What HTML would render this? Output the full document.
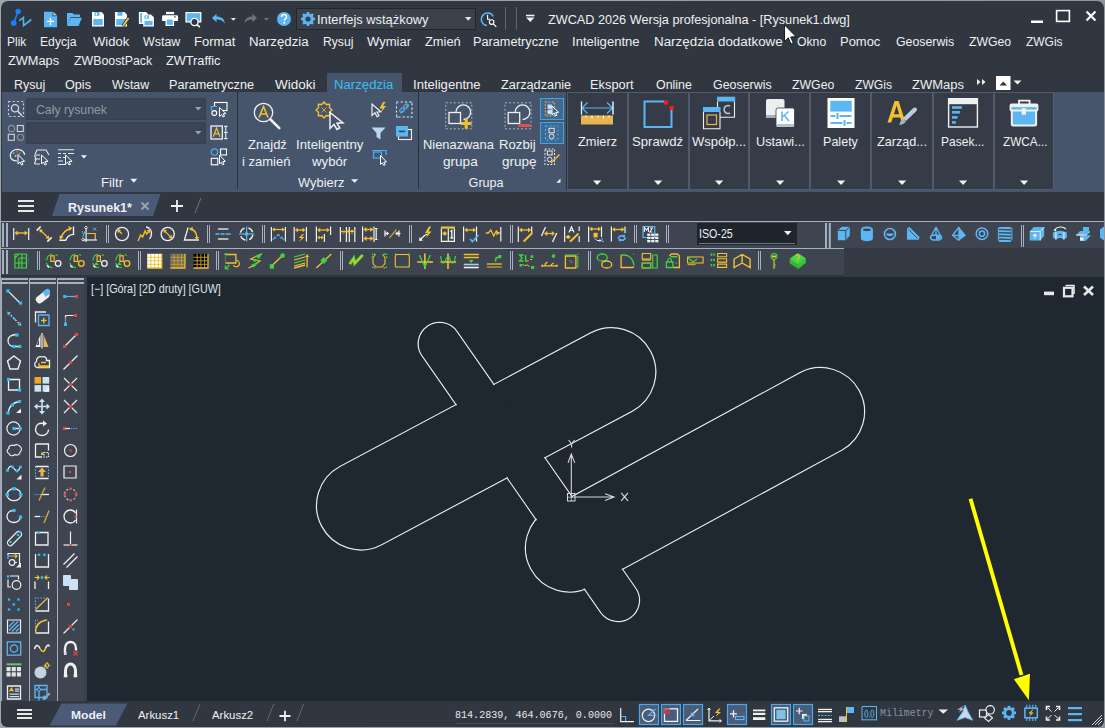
<!DOCTYPE html>
<html><head><meta charset="utf-8">
<style>
*{margin:0;padding:0;box-sizing:border-box}
html,body{width:1105px;height:728px;overflow:hidden;background:linear-gradient(to right,#9fa7ac,#9aa1a6 60%,#8f969b)}
body{position:relative;font-family:"Liberation Sans",sans-serif;color:#f0f0f0}
.a{position:absolute}
.t{position:absolute;white-space:pre;line-height:1;font-size:12.5px;color:#eef0f2}
svg{position:absolute;overflow:visible}
#win{position:absolute;left:1px;top:1px;width:1103px;height:726px;background:#313740;border-radius:7px 7px 6px 6px;overflow:hidden}
</style></head><body>
<div id="win"></div>
<!-- ribbon panel -->
<div class="a" style="left:2px;top:92px;width:1102px;height:100px;background:#47556c"></div>
<!-- toolbars -->
<div class="a" style="left:1px;top:221px;width:1103px;height:1px;background:#a3b1c2"></div>
<div class="a" style="left:1px;top:222px;width:1103px;height:26px;background:#3e4550"></div>
<div class="a" style="left:1px;top:248px;width:843px;height:1px;background:#a3b1c2"></div>
<div class="a" style="left:1px;top:249px;width:843px;height:26px;background:#3e4550"></div>
<div class="a" style="left:844px;top:248px;width:260px;height:29px;background:#343a44"></div>
<div class="a" style="left:1px;top:275px;width:843px;height:2px;background:#2e343c"></div>
<!-- left toolbar -->
<div class="a" style="left:1px;top:277px;width:86px;height:424px;background:#3e4550"></div>
<!-- drawing -->
<div class="a" style="left:87px;top:277px;width:1017px;height:424px;background:#1f2730"></div>
<!-- ===== TITLE BAR ===== -->
<svg style="left:0;top:0" width="1105" height="40">
 <!-- logo -->
 <line x1="18.1" y1="11.5" x2="13.7" y2="23.1" stroke="#1f7ff2" stroke-width="1.6"/>
 <circle cx="18.1" cy="11.5" r="2.7" fill="#1f7ff2"/>
 <circle cx="13.7" cy="23.1" r="2.9" fill="#1f7ff2"/>
 <polyline points="19.3,20.6 23.4,17.6 23.6,25.6 31.3,19.5" fill="none" stroke="#4bb6ee" stroke-width="1.6"/>
 <!-- new -->
 <path d="M44,11.8 H52.6 L57.1,16.2 V27.2 H44 Z" fill="#5cb6f2"/>
 <path d="M52.6,11.8 L57.1,16.2 H52.6 Z" fill="#313740"/>
 <path d="M53.3,11.8 L57.1,15.6 H53.3Z" fill="#8fd0f8"/>
 <path d="M47,21.4 H54 M50.5,18 V25" stroke="#fff" stroke-width="1.4"/>
 <!-- open -->
 <path d="M67,13 H72.5 L74,14.5 H80 V17 H70.5 L67,26 Z" fill="#5cb6f2"/>
 <path d="M70.5,17.8 H82 L78.5,26 H67 Z" fill="#5cb6f2"/>
 <!-- save -->
 <path d="M92,12 H101.5 L104,14.5 V26.4 H92 Z" fill="#fff"/>
 <rect x="93.2" y="19" width="9.6" height="6.2" fill="#5cb6f2"/>
 <rect x="94.5" y="12" width="5" height="3.8" fill="#5cb6f2"/>
 <rect x="95.8" y="12.6" width="1.2" height="2.6" fill="#fff"/>
 <!-- save as -->
 <path d="M115,12 H124.5 L127,14.5 V26.4 H115 Z" fill="#fff"/>
 <rect x="116.2" y="19" width="9.6" height="6.2" fill="#5cb6f2"/>
 <rect x="117.5" y="12" width="5" height="3.8" fill="#5cb6f2"/>
 <line x1="123" y1="26" x2="129" y2="17.5" stroke="#313740" stroke-width="3.4"/>
 <line x1="123.2" y1="25.8" x2="128.6" y2="18" stroke="#f2c232" stroke-width="2"/>
 <!-- save all -->
 <path d="M138.9,11.9 H146 L148,13.9 V23.9 H138.9 Z" fill="#fff"/>
 <rect x="140.2" y="13" width="1.8" height="9.8" fill="#5cb6f2"/>
 <path d="M143.2,14.4 H151 L153.9,17.3 V26.5 H143.2 Z" fill="#fff"/>
 <rect x="144.5" y="15.3" width="4.3" height="3.4" fill="#5cb6f2"/>
 <rect x="145.9" y="15.8" width="1.2" height="2.2" fill="#fff"/>
 <rect x="144.5" y="20.9" width="8.1" height="4.3" fill="#5cb6f2"/>
 <!-- print -->
 <rect x="166" y="11.9" width="8.1" height="2.3" fill="#fff"/>
 <path d="M163.3,15.3 H176.8 Q178,15.3 178,16.5 V20.9 H162.1 V16.5 Q162.1,15.3 163.3,15.3Z" fill="#fff"/>
 <rect x="174" y="16.4" width="1.8" height="1" fill="#313740"/>
 <rect x="165.5" y="18.7" width="8.6" height="7.3" fill="#fff"/>
 <rect x="166.8" y="19.6" width="6" height="5.2" fill="#5cb6f2"/>
 <!-- preview -->
 <rect x="185.4" y="12" width="16" height="10.5" fill="#fff"/>
 <rect x="186.6" y="13.2" width="13.6" height="8.1" fill="#5cb6f2"/>
 <circle cx="194.5" cy="22" r="3.6" fill="#313740" stroke="#fff" stroke-width="1.3"/>
 <line x1="197" y1="24.5" x2="199.8" y2="27.2" stroke="#fff" stroke-width="1.6"/>
 <!-- undo -->
 <path d="M212,18 L216.5,13.8 V16.6 C221,16.6 224.6,18.5 224.6,23.8 C223,20.5 220.5,19.6 216.5,19.6 V22.3 Z" fill="#5cb6f2"/>
 <path d="M230.8,18 H236 L233.4,20.8Z" fill="#e8e8e8"/>
 <!-- redo -->
 <path d="M257,18 L252.5,13.8 V16.6 C248,16.6 244.6,18.5 244.6,23.8 C246,20.5 248.5,19.6 252.5,19.6 V22.3 Z" fill="#6d737b"/>
 <path d="M263.8,18 H269 L266.4,20.8Z" fill="#6d737b"/>
 <!-- help -->
 <circle cx="284" cy="19" r="7" fill="#5cb6f2"/>
 <path d="M281.6,17 C281.6,15.2 282.8,14.6 284.1,14.6 C285.6,14.6 286.6,15.5 286.6,16.8 C286.6,18.6 284.3,18.7 284.3,20.8" fill="none" stroke="#fff" stroke-width="1.5"/>
 <rect x="283.4" y="22" width="1.7" height="1.7" fill="#fff"/>
 <!-- combo -->
 <rect x="296.5" y="8.5" width="179" height="21" fill="#3a414b" stroke="#22272e" stroke-width="1"/>
 <g transform="translate(308,19)">
  <circle r="4.6" fill="none" stroke="#5cb6f2" stroke-width="2.4"/>
  <g stroke="#5cb6f2" stroke-width="2.4">
   <line x1="0" y1="-7" x2="0" y2="7"/><line x1="-7" y1="0" x2="7" y2="0"/>
   <line x1="-5" y1="-5" x2="5" y2="5"/><line x1="-5" y1="5" x2="5" y2="-5"/>
  </g>
  <circle r="2.6" fill="#3a414b"/>
 </g>
 <path d="M465,17 H471.5 L468.25,20.8Z" fill="#e8e8e8"/>
 <!-- clock search -->
 <path d="M493.3,16.5 A6.3,6.3 0 1 0 487,25.6" fill="none" stroke="#5cb6f2" stroke-width="1.5"/>
 <path d="M487.6,14.8 V19.3 H490" fill="none" stroke="#fff" stroke-width="1.1"/>
 <circle cx="491.6" cy="22.1" r="2.3" fill="#313740" stroke="#fff" stroke-width="1.1"/>
 <line x1="493.3" y1="23.8" x2="496.3" y2="26.8" stroke="#fff" stroke-width="1.2"/>
 <!-- separators -->
 <rect x="505" y="7" width="1" height="23" fill="#62676e"/>
 <rect x="516" y="7" width="1" height="23" fill="#62676e"/>
 <rect x="526" y="14.7" width="8.5" height="1.6" fill="#f0f0f0"/>
 <path d="M526,17.6 H534.5 L530.25,22Z" fill="#f0f0f0"/>
 <!-- window controls -->
 <rect x="1031" y="20.5" width="12" height="2.5" fill="#fff"/>
 <rect x="1056.6" y="10.6" width="12.8" height="10.8" fill="none" stroke="#fff" stroke-width="1.6"/>
 <path d="M1086.5,11.5 L1095.5,20.5 M1095.5,11.5 L1086.5,20.5" stroke="#fff" stroke-width="2.2"/>
</svg>
<div class="t" style="left:317.39px;top:14.4px;font-size:12.7px;transform:scaleX(1.0138);transform-origin:0 0">Interfejs wstążkowy</div>
<div class="t" style="left:548.40px;top:14px;font-size:12.7px;transform:scaleX(0.9987);transform-origin:0 0">ZWCAD 2026 Wersja profesjonalna - [Rysunek1.dwg]</div>
<!-- ===== MENU BAR ===== -->
<div class="a" style="left:327px;top:73px;width:75px;height:19px;background:#47556c"></div>
<div class="t" style="left:7.44px;top:36px;transform:scaleX(0.9579);transform-origin:0 0">Plik</div>
<div class="t" style="left:40.33px;top:36px;transform:scaleX(0.9730);transform-origin:0 0">Edycja</div>
<div class="t" style="left:92.50px;top:36px;transform:scaleX(1.0429);transform-origin:0 0">Widok</div>
<div class="t" style="left:143.20px;top:36px;transform:scaleX(0.9947);transform-origin:0 0">Wstaw</div>
<div class="t" style="left:193.96px;top:36px;transform:scaleX(1.0436);transform-origin:0 0">Format</div>
<div class="t" style="left:249.04px;top:36px;transform:scaleX(1.0600);transform-origin:0 0">Narzędzia</div>
<div class="t" style="left:322.63px;top:36px;transform:scaleX(0.9733);transform-origin:0 0">Rysuj</div>
<div class="t" style="left:367.20px;top:36px;transform:scaleX(1.0429);transform-origin:0 0">Wymiar</div>
<div class="t" style="left:425.00px;top:36px;transform:scaleX(1.0294);transform-origin:0 0">Zmień</div>
<div class="t" style="left:473.38px;top:36px;transform:scaleX(1.0169);transform-origin:0 0">Parametryczne</div>
<div class="t" style="left:572.45px;top:36px;transform:scaleX(1.0460);transform-origin:0 0">Inteligentne</div>
<div class="t" style="left:653.53px;top:36px;transform:scaleX(1.0706);transform-origin:0 0">Narzędzia dodatkowe</div>
<div class="t" style="left:796.70px;top:36px;transform:scaleX(0.9767);transform-origin:0 0">Okno</div>
<div class="t" style="left:840.16px;top:36px;transform:scaleX(1.0368);transform-origin:0 0">Pomoc</div>
<div class="t" style="left:895.80px;top:36px;transform:scaleX(0.9864);transform-origin:0 0">Geoserwis</div>
<div class="t" style="left:969.40px;top:36px;transform:scaleX(0.9791);transform-origin:0 0">ZWGeo</div>
<div class="t" style="left:1026.00px;top:36px;transform:scaleX(0.9579);transform-origin:0 0">ZWGis</div>
<div class="t" style="left:8.40px;top:54.5px;transform:scaleX(1.0220);transform-origin:0 0">ZWMaps</div>
<div class="t" style="left:74.00px;top:54.5px;transform:scaleX(0.9873);transform-origin:0 0">ZWBoostPack</div>
<div class="t" style="left:166.00px;top:54.5px;transform:scaleX(1.0189);transform-origin:0 0">ZWTraffic</div>
<div class="t" style="left:14.20px;top:79px;transform:scaleX(0.9967);transform-origin:0 0">Rysuj</div>
<div class="t" style="left:65.40px;top:79px;transform:scaleX(1.0115);transform-origin:0 0">Opis</div>
<div class="t" style="left:112.30px;top:79px;transform:scaleX(0.9921);transform-origin:0 0">Wstaw</div>
<div class="t" style="left:169.29px;top:79px;transform:scaleX(1.0108);transform-origin:0 0">Parametryczne</div>
<div class="t" style="left:275.00px;top:79px;transform:scaleX(1.0811);transform-origin:0 0">Widoki</div>
<div class="t" style="left:334.35px;top:79px;transform:scaleX(1.0545);transform-origin:0 0;color:#38bdf5">Narzędzia</div>
<div class="t" style="left:413.35px;top:79px;transform:scaleX(1.0460);transform-origin:0 0">Inteligentne</div>
<div class="t" style="left:501.00px;top:79px;transform:scaleX(1.0206);transform-origin:0 0">Zarządzanie</div>
<div class="t" style="left:590.37px;top:79px;transform:scaleX(1.0262);transform-origin:0 0">Eksport</div>
<div class="t" style="left:655.80px;top:79px;transform:scaleX(0.9917);transform-origin:0 0">Online</div>
<div class="t" style="left:712.80px;top:79px;transform:scaleX(0.9932);transform-origin:0 0">Geoserwis</div>
<div class="t" style="left:792.20px;top:79px;transform:scaleX(0.9837);transform-origin:0 0">ZWGeo</div>
<div class="t" style="left:855.20px;top:79px;transform:scaleX(0.9684);transform-origin:0 0">ZWGis</div>
<div class="t" style="left:911.90px;top:79px;transform:scaleX(1.0380);transform-origin:0 0">ZWMaps</div>
<svg style="left:0;top:0" width="1105" height="95">
 <path d="M977,79 L980.5,82 L977,85Z M982,79 L985.5,82 L982,85Z" fill="#f0f0f0"/>
 <rect x="996" y="76" width="14.5" height="14" fill="#fff"/>
 <path d="M999.5,85.5 H1007 L1003.25,81.5Z" fill="#313740"/>
 <path d="M1013.5,80.5 H1021.5 L1017.5,84.6Z" fill="#f0f0f0"/>
 <!-- mouse cursor -->
 <path d="M784.5,25 V41.5 L788.3,37.8 L791,44 L793.3,43 L790.7,37 L796,36.6 Z" fill="#fff" stroke="#111" stroke-width="0.9"/>
</svg>
<!-- ===== RIBBON PANEL ===== -->
<div class="a" style="left:26px;top:98px;width:180px;height:21.5px;background:#3b4556;border:1px solid #344051"></div>
<div class="a" style="left:26px;top:122px;width:180px;height:21.5px;background:#3b4556;border:1px solid #344051"></div>
<div class="a" style="left:237px;top:92px;width:1px;height:97px;background:#29303a"></div>
<div class="a" style="left:418px;top:92px;width:1px;height:97px;background:#29303a"></div>
<div class="a" style="left:566px;top:92px;width:1px;height:98px;background:#29303a"></div>
<!-- big buttons -->
<div class="a" style="left:567px;top:92px;width:61px;height:98px;background:#353c48;border:1px solid #515b69"></div>
<div class="a" style="left:628px;top:92px;width:61px;height:98px;background:#353c48;border:1px solid #515b69"></div>
<div class="a" style="left:689px;top:92px;width:60px;height:98px;background:#353c48;border:1px solid #515b69"></div>
<div class="a" style="left:749px;top:92px;width:61px;height:98px;background:#353c48;border:1px solid #515b69"></div>
<div class="a" style="left:810px;top:92px;width:61px;height:98px;background:#353c48;border:1px solid #515b69"></div>
<div class="a" style="left:871px;top:92px;width:62px;height:98px;background:#353c48;border:1px solid #515b69"></div>
<div class="a" style="left:933px;top:92px;width:61px;height:98px;background:#353c48;border:1px solid #515b69"></div>
<div class="a" style="left:994px;top:92px;width:60px;height:98px;background:#353c48;border:1px solid #515b69"></div>
<!-- blue toggle buttons -->
<div class="a" style="left:540px;top:98px;width:24px;height:22px;background:#41688e;border:1px solid #3ea6e8"></div>
<div class="a" style="left:540px;top:122px;width:24px;height:22px;background:#41688e;border:1px solid #3ea6e8"></div>
<!-- labels -->
<div class="t" style="left:35.80px;top:104.3px;font-size:12.6px;transform:scaleX(0.9753);transform-origin:0 0;color:#8e9aa8">Cały rysunek</div>
<div class="t" style="left:100.95px;top:177px;font-size:12.6px;transform:scaleX(1.0500);transform-origin:0 0">Filtr</div>
<div class="t" style="left:248.00px;top:139px;font-size:12.6px;transform:scaleX(1.0270);transform-origin:0 0">Znajdź</div>
<div class="t" style="left:242.47px;top:156px;font-size:12.6px;transform:scaleX(1.0326);transform-origin:0 0">i zamień</div>
<div class="t" style="left:295.85px;top:139px;font-size:12.6px;transform:scaleX(1.0460);transform-origin:0 0">Inteligentny</div>
<div class="t" style="left:312.00px;top:156px;font-size:12.6px;transform:scaleX(1.0500);transform-origin:0 0">wybór</div>
<div class="t" style="left:297.50px;top:177px;font-size:12.6px;transform:scaleX(1.0244);transform-origin:0 0">Wybierz</div>
<div class="t" style="left:423.38px;top:139px;font-size:12.6px;transform:scaleX(1.0221);transform-origin:0 0">Nienazwana</div>
<div class="t" style="left:442.50px;top:156px;font-size:12.6px;transform:scaleX(1.0781);transform-origin:0 0">grupa</div>
<div class="t" style="left:499.35px;top:139px;font-size:12.6px;transform:scaleX(1.0471);transform-origin:0 0">Rozbij</div>
<div class="t" style="left:501.60px;top:156px;font-size:12.6px;transform:scaleX(1.0750);transform-origin:0 0">grupę</div>
<div class="t" style="left:468.60px;top:177px;font-size:12.6px;transform:scaleX(1.0000);transform-origin:0 0">Grupa</div>
<div class="t" style="left:578.40px;top:136px;font-size:12.6px;transform:scaleX(1.0158);transform-origin:0 0">Zmierz</div>
<div class="t" style="left:631.96px;top:136px;font-size:12.6px;transform:scaleX(1.0417);transform-origin:0 0">Sprawdź</div>
<div class="t" style="left:692.30px;top:136px;font-size:12.6px;transform:scaleX(1.0327);transform-origin:0 0">Współp...</div>
<div class="t" style="left:756.49px;top:136px;font-size:12.6px;transform:scaleX(1.0109);transform-origin:0 0">Ustawi...</div>
<div class="t" style="left:823.40px;top:136px;font-size:12.6px;transform:scaleX(0.9971);transform-origin:0 0">Palety</div>
<div class="t" style="left:877.00px;top:136px;font-size:12.6px;transform:scaleX(1.0041);transform-origin:0 0">Zarząd...</div>
<div class="t" style="left:941.05px;top:136px;font-size:12.6px;transform:scaleX(0.9545);transform-origin:0 0">Pasek...</div>
<div class="t" style="left:1003.00px;top:136px;font-size:12.6px;transform:scaleX(0.9362);transform-origin:0 0">ZWCA...</div>
<svg style="left:0;top:0" width="1105" height="200">
 <!-- dropdown arrows -->
 <g fill="#9aa3ad">
  <path d="M195,107 H201.5 L198.25,110.6Z"/><path d="M195,131 H201.5 L198.25,134.6Z"/>
 </g>
 <g fill="#f2f2f2">
  <path d="M80.9,155.2 H86.9 L83.9,158.4Z"/>
  <path d="M130.4,178.8 H137.2 L133.8,182.8Z"/>
  <path d="M351,179.2 H358.2 L354.6,182.8Z"/>
  <path d="M560.5,178.6 V182.8 H556.3Z"/>
  <path d="M593,180.5 H601.2 L597.1,185Z"/>
  <path d="M654,180.5 H662.2 L658.1,185Z"/>
  <path d="M715,180.5 H723.2 L719.1,185Z"/>
  <path d="M776,180.5 H784.2 L780.1,185Z"/>
  <path d="M837,180.5 H845.2 L841.1,185Z"/>
  <path d="M898,180.5 H906.2 L902.1,185Z"/>
  <path d="M959,180.5 H967.2 L963.1,185Z"/>
  <path d="M1020,180.5 H1028.2 L1024.1,185Z"/>
 </g>
 <!-- filtr icons -->
 <rect x="8.5" y="101.5" width="15" height="15" fill="none" stroke="#c5cad0" stroke-width="1.1" stroke-dasharray="2.2,2"/>
 <circle cx="15" cy="108.3" r="3.6" fill="#47556c" stroke="#d2d6da" stroke-width="1.3"/>
 <line x1="17.6" y1="111" x2="22" y2="115.6" stroke="#d2d6da" stroke-width="1.6"/>
 <circle cx="11.5" cy="128.5" r="3.1" fill="none" stroke="#8c939b" stroke-width="1.1"/>
 <rect x="17.3" y="125.5" width="6" height="6" fill="none" stroke="#d0d4d8" stroke-width="1.1"/>
 <rect x="8.3" y="134.3" width="6" height="6" fill="none" stroke="#d0d4d8" stroke-width="1.1"/>
 <circle cx="20.5" cy="137.3" r="3.1" fill="none" stroke="#8c939b" stroke-width="1.1"/>
 <!-- right col -->
 <rect x="214.5" y="102.5" width="12.5" height="8" fill="none" stroke="#fff" stroke-width="1.1"/>
 <rect x="211" y="106" width="8" height="5" fill="#47556c"/>
 <path d="M211.3,110.5 V106.5 H217" fill="none" stroke="#4fb0f0" stroke-width="1.2"/>
 <circle cx="214.3" cy="113" r="2.4" fill="none" stroke="#fff" stroke-width="1.1"/>
 <path d="M219.5,107.5 V116.5 L221.5,114.5 L223,117 L224.5,116.3 L223.2,113.8 L226,113.6Z" fill="#47556c" stroke="#fff" stroke-width="1"/>
 <rect x="211" y="126" width="11.3" height="13" fill="none" stroke="#fff" stroke-width="1.2"/>
 <path d="M213.3,136.8 L216.6,128 L220,136.8 M214.5,133.8 H218.8" fill="none" stroke="#f2c232" stroke-width="1.2"/>
 <path d="M225.8,126 V139 M224,126.3 H227.6 M224,138.7 H227.6 M224,132.5 H227.6" fill="none" stroke="#fff" stroke-width="1"/>
 <circle cx="214.5" cy="152" r="3.2" fill="none" stroke="#4fb0f0" stroke-width="1.2"/>
 <rect x="220.5" y="149" width="6" height="6" fill="none" stroke="#fff" stroke-width="1.1"/>
 <rect x="211.3" y="158.3" width="6.5" height="6.5" fill="none" stroke="#fff" stroke-width="1.1"/>
 <path d="M219.5,155 V164 L221.3,162.2 L222.6,164.8 L224,164.2 L222.8,161.6 L225.4,161.4Z" fill="#47556c" stroke="#fff" stroke-width="1"/>
 <!-- row 3 -->
 <path d="M17,161 C11,161 10.3,157.5 10.3,155.5 C10.3,151.5 14,149.3 17.5,149.3 C21.5,149.3 24.5,151.8 24.5,155" fill="none" stroke="#e8eaec" stroke-width="1.2"/>
 <circle cx="13.7" cy="153.2" r="1" fill="#4fb0f0"/><circle cx="16.8" cy="151.8" r="1" fill="#e05050"/><circle cx="19.6" cy="153.5" r="1" fill="#40c060"/><circle cx="15.6" cy="156" r="1" fill="#f2c232"/>
 <path d="M18,154.5 V164 L20,162 L21.5,165 L23,164.3 L21.6,161.5 L24.6,161.3Z" fill="#47556c" stroke="#fff" stroke-width="1"/>
 <path d="M35,154 L37,150 H46 L49,155 M35,155 H40 M34.5,159 H40 M34.5,164 H40 M34.5,155 L36,159 L34.5,164" fill="none" stroke="#e8eaec" stroke-width="1.1"/>
 <path d="M41.5,155 V164 L43.5,162 L45,165 L46.5,164.3 L45.1,161.5 L48.1,161.3Z" fill="#47556c" stroke="#fff" stroke-width="1"/>
 <path d="M58,149.8 H74 M58,153.5 H61 M63,153.5 H66 M68,153.5 H74 M58,157.5 H61 M63,157.5 H65 M58,161 H63 M58,164.5 H66" fill="none" stroke="#e8eaec" stroke-width="1.1"/>
 <path d="M65.5,155 V164 L67.5,162 L69,165 L70.5,164.3 L69.1,161.5 L72.1,161.3Z" fill="#47556c" stroke="#fff" stroke-width="1"/>
 <!-- Znajdz -->
 <circle cx="263.5" cy="112.5" r="9.2" fill="none" stroke="#f0f0f0" stroke-width="1.3"/>
 <path d="M259,117.5 L263.5,106.5 L268,117.5 M260.6,114 H266.4" fill="none" stroke="#f2c232" stroke-width="1.6"/>
 <line x1="270.5" y1="119.5" x2="279.3" y2="128.2" stroke="#f0f0f0" stroke-width="2.6" stroke-linecap="round"/>
 <!-- Inteligentny wybor -->
 <g transform="translate(324,110)">
  <path d="M0,-8 L2.3,-5.5 L5.7,-5.7 L5.5,-2.3 L8,0 L5.5,2.3 L5.7,5.7 L2.3,5.5 L0,8 L-2.3,5.5 L-5.7,5.7 L-5.5,2.3 L-8,0 L-5.5,-2.3 L-5.7,-5.7 L-2.3,-5.5Z" fill="none" stroke="#f2c232" stroke-width="1.3"/>
  <path d="M-2.5,-2.5 L2.5,2.5 M2.5,-2.5 L-2.5,2.5" stroke="#c9a22a" stroke-width="1"/>
 </g>
 <path d="M330,112.5 V128.5 L334,124.5 L337,129.5 L339.8,128 L337,123.2 L343,122.8Z" fill="#47556c" stroke="#f0f0f0" stroke-width="1.5"/>
 <!-- small cols -->
 <path d="M372,104 V115.5 L375,112.8 L377,116.8 L379,115.8 L377,112 L380.8,111.8Z" fill="#47556c" stroke="#f0f0f0" stroke-width="1.2"/>
 <path d="M383,102 L379.5,108.5 H382.5 L380.5,113 L386,106 H383 L385.5,102Z" fill="#f2c232"/>
 <path d="M371.5,127.5 H385.5 L380.5,133 V139.5 L376.5,137 V133Z" fill="#b9d7f0"/>
 <rect x="373.5" y="152" width="8" height="6" fill="none" stroke="#4fb0f0" stroke-width="1.2"/>
 <path d="M372,150.5 H386 V155" fill="none" stroke="#4fb0f0" stroke-width="1.2"/>
 <path d="M380.5,155.5 V164.5 L382.3,162.8 L383.7,165.4 L385.2,164.7 L383.9,162.1 L386.5,161.9Z" fill="#47556c" stroke="#fff" stroke-width="1"/>
 <rect x="396.5" y="102" width="15.5" height="15" fill="none" stroke="#e8eaec" stroke-width="1.1" stroke-dasharray="2.2,2"/>
 <path d="M396,101.5h2v2h-2z M410.5,101.5h2v2h-2z M396,116h2v2h-2z M410.5,116h2v2h-2z" fill="#4fb0f0"/>
 <path d="M400.5,113 L403,110.5 M406,107 L408.5,104.5" stroke="#4fb0f0" stroke-width="1.3"/>
 <rect x="399.5" y="108.5" width="5" height="3.5" rx="1.6" transform="rotate(-45 402 110.2)" fill="none" stroke="#4fb0f0" stroke-width="1.2"/>
 <rect x="403.5" y="104.5" width="5" height="3.5" rx="1.6" transform="rotate(-45 406 106.2)" fill="none" stroke="#4fb0f0" stroke-width="1.2"/>
 <rect x="398.5" y="129.5" width="13" height="10" fill="none" stroke="#f0f0f0" stroke-width="1.1"/>
 <rect x="396" y="126" width="12" height="10.5" fill="#5cb6f2"/>
 <rect x="398.8" y="130.6" width="6.5" height="1.6" fill="#2a4a6a"/>
 <!-- Nienazwana grupa -->
 <rect x="445.8" y="102.8" width="26" height="26" fill="none" stroke="#aab3bd" stroke-width="1" stroke-dasharray="2,2"/>
 <rect x="449" y="112.5" width="11.5" height="11" fill="none" stroke="#f0f0f0" stroke-width="1.3"/>
 <path d="M456,112 A7.3,7.3 0 1 1 463.5,119.5" fill="none" stroke="#f0f0f0" stroke-width="1.3"/>
 <path d="M461,123.5 H471.5 M466.2,118.3 V128.8" stroke="#f2c232" stroke-width="3"/>
 <!-- Rozbij grupe -->
 <rect x="505" y="102.8" width="26" height="26" fill="none" stroke="#aab3bd" stroke-width="1" stroke-dasharray="2,2"/>
 <rect x="508.2" y="112.5" width="11.5" height="11" fill="none" stroke="#f0f0f0" stroke-width="1.3"/>
 <path d="M515.2,112 A7.3,7.3 0 1 1 522.7,119.5" fill="none" stroke="#f0f0f0" stroke-width="1.3"/>
 <rect x="518.5" y="124" width="12" height="3" fill="#e05050"/>
 <!-- group small buttons -->
 <rect x="545.4" y="102.2" width="9" height="13.6" fill="none" stroke="#f2a020" stroke-width="1.3" stroke-dasharray="1.6,1.6"/>
 <rect x="547.5" y="104.5" width="4.3" height="4.3" fill="#c9e2f8"/>
 <circle cx="549.6" cy="112" r="2.4" fill="#c9e2f8"/>
 <path d="M552,106 V115 L554,113 L555.5,116 L557,115.3 L555.6,112.5 L558.6,112.3Z" fill="#41688e" stroke="#fff" stroke-width="1"/>
 <rect x="545.5" y="126" width="12.5" height="14" fill="none" stroke="#4fb0f0" stroke-width="1.1" stroke-dasharray="2,2"/>
 <rect x="549" y="128.3" width="5.2" height="4.5" fill="none" stroke="#e8eaec" stroke-width="1"/>
 <circle cx="551.6" cy="136.5" r="2.4" fill="none" stroke="#e8eaec" stroke-width="1"/>
 <rect x="545" y="149" width="9.5" height="15.5" fill="none" stroke="#e8eaec" stroke-width="1.1" stroke-dasharray="1.8,1.6"/>
 <rect x="547.3" y="151" width="4.8" height="4" fill="none" stroke="#e8eaec" stroke-width="1"/>
 <circle cx="549.7" cy="159.5" r="2.3" fill="none" stroke="#e8eaec" stroke-width="1"/>
 <line x1="551" y1="163" x2="559.5" y2="154.5" stroke="#f2c232" stroke-width="1.5"/>
 <!-- Zmierz -->
 <path d="M581.5,101.5 V114.5 M613,101.5 V114.5 M582,108 H612.5 M587.5,102.5 L582,108 L587.5,113.5 M607,102.5 L612.5,108 L607,113.5" fill="none" stroke="#5cb6f2" stroke-width="1.2"/>
 <path d="M581.5,101.5 V114.5 M613,101.5 V114.5" stroke="#f0f0f0" stroke-width="1.2"/>
 <rect x="581" y="115.5" width="32" height="9" fill="#e8b552"/>
 <path d="M586,115.5 V117.5 M592,115.5 V118.5 M598,115.5 V117.5 M603.5,115.5 V118.5 M609,115.5 V117.5" stroke="#fff" stroke-width="1"/>
 <!-- Sprawdz -->
 <path d="M664.5,101.5 H644.5 V127 H671.5 V108" fill="none" stroke="#5cb6f2" stroke-width="2"/>
 <rect x="664" y="100.5" width="4" height="4" fill="#ff1a1a"/>
 <rect x="669.5" y="106" width="4" height="4" fill="#ff1a1a"/>
 <!-- Wspolp -->
 <rect x="717" y="96.7" width="18.2" height="4.8" fill="#5cb6f2"/>
 <path d="M717.5,101.5 V117.2 H734.5 V101.5" fill="none" stroke="#f0f0f0" stroke-width="1.1"/>
 <path d="M730,106 A4,4 0 1 0 730,113" fill="none" stroke="#b8c3cf" stroke-width="1.6"/>
 <rect x="703" y="107" width="17" height="22" fill="#353c48"/>
 <rect x="703" y="107" width="17.5" height="5" fill="#5cb6f2"/>
 <path d="M703.5,112 V128.8 H720 V112" fill="none" stroke="#f0f0f0" stroke-width="1.1"/>
 <rect x="707" y="115" width="9.5" height="9.5" fill="none" stroke="#e8b552" stroke-width="1.2"/>
 <!-- Ustawi -->
 <rect x="766" y="99" width="18.5" height="18.5" rx="2" fill="#eceef0"/>
 <rect x="766" y="115" width="18.5" height="3" fill="#a9b0b8"/>
 <rect x="776" y="108" width="18.5" height="18.5" rx="2" fill="#fff" stroke="#353c48" stroke-width="0.8"/>
 <rect x="776.5" y="124" width="17.5" height="3" fill="#b9c0c8"/>
 <path d="M782,111.5 V121 M788.6,111.5 L782.4,117 M784.4,115.5 L789,121" stroke="#5cb6f2" stroke-width="1.6" fill="none"/>
 <!-- Palety -->
 <rect x="827.5" y="98" width="27" height="30" fill="#fff"/>
 <rect x="830.3" y="100.8" width="21.5" height="10.8" fill="#5cb6f2"/>
 <path d="M830.5,116 H835.5 M839.5,116 H851.5 M830.5,123 H842.5 M846.5,123 H851.5" stroke="#5cb6f2" stroke-width="1.8"/>
 <path d="M837.5,113 V119 M844.5,120 V126" stroke="#5cb6f2" stroke-width="2"/>
 <!-- Zarzad -->
 <path d="M887.5,122.6 L894.6,101 H898.6 L905.5,122.6 H901.8 L900.2,117.4 H892.9 L891.2,122.6Z M893.9,114.2 H899.2 L896.6,105.6Z" fill="#f2c12e" fill-rule="evenodd"/>
 <path d="M903,118 L913,108.3 C914.5,106.8 917,107.4 917,109.6 C917,110.3 916.6,110.9 916,111.5 L906,121Z" fill="#b9cbe0"/>
 <path d="M902.3,118.8 L905.7,121.8 C904,124 901.5,125 899.3,125 C900,122.5 901,120 902.3,118.8Z" fill="#9fb3c9"/>
 <!-- Pasek -->
 <rect x="948.6" y="98.7" width="28.8" height="28.3" fill="none" stroke="#f0f0f0" stroke-width="1.4"/>
 <rect x="948" y="98" width="30" height="6.2" fill="#f0f0f0"/>
 <rect x="952" y="106.2" width="9.8" height="2.6" fill="#5cb6f2"/>
 <rect x="952" y="111" width="7.9" height="2.6" fill="#5cb6f2"/>
 <rect x="952" y="116.1" width="5.6" height="2.6" fill="#5cb6f2"/>
 <rect x="952" y="121.1" width="3.8" height="2.6" fill="#5cb6f2"/>
 <!-- ZWCA toolbox -->
 <path d="M1019,104.5 V100.6 H1029.6 V104.5" fill="none" stroke="#f0f0f0" stroke-width="1.8"/>
 <rect x="1011.8" y="109.5" width="24.3" height="16" rx="1.5" fill="#5cb6f2" stroke="#f0f0f0" stroke-width="2"/>
 <rect x="1010.5" y="104.5" width="27" height="6" rx="1" fill="#5cb6f2" stroke="#f0f0f0" stroke-width="1.8"/>
 <rect x="1010.5" y="104.5" width="27" height="2.6" fill="#f0f0f0"/>
 <rect x="1021.6" y="108.2" width="4.4" height="6.6" fill="#f0f0f0"/>
</svg>
<!-- ===== FILE TABS ===== -->
<svg style="left:0;top:0" width="1105" height="222">
 <rect x="18" y="200" width="16" height="2" fill="#e8e8e8"/>
 <rect x="18" y="205" width="16" height="2" fill="#e8e8e8"/>
 <rect x="18" y="210" width="16" height="2" fill="#e8e8e8"/>
 <path d="M59.5,194 H160.5 L153,216 H52 Z" fill="#4b5b77"/>
 <path d="M141.5,202.5 L148.5,209.5 M148.5,202.5 L141.5,209.5" stroke="#9aa3ae" stroke-width="1.8"/>
 <path d="M171,206 H183 M177,200 V212" stroke="#f0f0f0" stroke-width="1.8"/>
 <line x1="201" y1="198" x2="195" y2="213" stroke="#6b7380" stroke-width="1"/>
</svg>
<div class="t" style="left:67.98px;top:202px;font-size:12.3px;transform:scaleX(1.0161);transform-origin:0 0;font-weight:bold">Rysunek1*</div>
<!-- ===== TOOLBARS ===== -->
<div class="a" style="left:697px;top:223px;width:100px;height:22px;background:#1f252d"></div>
<div class="a" style="left:699px;top:243px;width:96px;height:1px;background:#6c7480"></div>
<div class="t" style="left:699.45px;top:228px;font-size:12.5px;transform:scaleX(0.8526);transform-origin:0 0;color:#f0f0f0">ISO-25</div>
<svg style="left:0;top:0" width="1105" height="280"><rect x="2" y="223" width="2" height="24" fill="#a3b1c2"/><rect x="6" y="223" width="2" height="24" fill="#a3b1c2"/>
<g transform="translate(12.7,226)"><line x1="1" y1="2" x2="1" y2="14" stroke="#f0f0f0" stroke-width="1.2"/><line x1="16" y1="2" x2="16" y2="14" stroke="#f0f0f0" stroke-width="1.2"/><line x1="3.72" y1="7.00" x2="13.28" y2="7.00" stroke="#f2c12e" stroke-width="1.4"/><path d="M15.20,7.00 L12.00,9.40 L12.00,4.60Z" fill="#f2c12e"/><path d="M1.80,7.00 L5.00,9.40 L5.00,4.60Z" fill="#f2c12e"/></g>
<g transform="translate(36.1,226)"><line x1="0.6" y1="4.6" x2="4.6" y2="0.5" stroke="#f0f0f0" stroke-width="1.6"/><line x1="11.2" y1="15.6" x2="15.6" y2="11.4" stroke="#f0f0f0" stroke-width="1.6"/><line x1="4.50" y1="4.55" x2="12.00" y2="11.75" stroke="#f2c12e" stroke-width="1.2"/><path d="M13.30,13.00 L9.58,12.54 L12.69,9.30Z" fill="#f2c12e"/><path d="M3.20,3.30 L3.81,7.00 L6.92,3.76Z" fill="#f2c12e"/></g>
<g transform="translate(58.9,226)"><path d="M0.5,14.2 H6.8 C8.5,11 9.5,9 14.6,8.4 V0.5" fill="none" stroke="#f0f0f0" stroke-width="1.4"/><path d="M2,12 C4,6 8,3.5 12,2.5" fill="none" stroke="#f2c12e" stroke-width="1.8"/><path d="M13.5,2 L9.5,0 L10.5,5Z" fill="#f2c12e"/><path d="M1,14 L0.5,9.5 L4.5,11Z" fill="#f2c12e"/></g>
<g transform="translate(81.7,226)"><rect x="5.2" y="7.2" width="8" height="6.5" fill="none"/><path d="M5.5,7.5 H13.5 V14" fill="none" stroke="#f2c12e" stroke-width="1.2"/><line x1="4.4" y1="2" x2="4.4" y2="16" stroke="#f0f0f0" stroke-width="1.2"/><line x1="1.5" y1="14" x2="15.3" y2="14" stroke="#f0f0f0" stroke-width="1.2"/><path d="M4.4,0 L6,1.6 L4.4,3.2 L2.8,1.6Z" fill="none" stroke="#f0f0f0" stroke-width="0.9"/><path d="M1.5,12 L3.1,13.6 L1.5,15.2 L-0.1,13.6Z" fill="none" stroke="#f0f0f0" stroke-width="0.9"/><path d="M0.5,5 L2,8.5 M3.5,5 L1,11" fill="none" stroke="#5cb6f2" stroke-width="1"/><path d="M11.5,1.5 L14.5,4.5 M14.5,1.5 L11.5,4.5" fill="none" stroke="#5cb6f2" stroke-width="1"/></g>
<rect x="106" y="225" width="1" height="18" fill="#a3b1c2"/><rect x="108" y="225" width="1" height="18" fill="#a3b1c2"/>
<g transform="translate(114.7,226)"><circle cx="7.3" cy="8" r="6.6" fill="none" stroke="#f0f0f0" stroke-width="1.3"/><line x1="3.5" y1="4.2" x2="7.2" y2="7.8" stroke="#f2c12e" stroke-width="1.3"/><path d="M2.5,3.2 L6.5,3.8 L3.1,7.2Z" fill="#f2c12e"/></g>
<g transform="translate(137.6,226)"><path d="M8.5,1 C12,1.5 14,4.5 13.9,7.5 C13.8,10 13,12 11.8,13" fill="none" stroke="#f0f0f0" stroke-width="1.4"/><path d="M0.5,15 L3,9 L5,11 L7.5,5 L9,8 L12,4.5" fill="none" stroke="#f2c12e" stroke-width="1.4"/><path d="M13,3.5 L9,4 L12,7.5Z" fill="#f2c12e"/></g>
<g transform="translate(160.4,226)"><circle cx="7.3" cy="8" r="6.6" fill="none" stroke="#f0f0f0" stroke-width="1.3"/><line x1="4.18" y1="4.87" x2="10.52" y2="11.13" stroke="#f2c12e" stroke-width="1.2"/><path d="M11.80,12.40 L8.08,11.89 L11.25,8.69Z" fill="#f2c12e"/><path d="M2.90,3.60 L3.45,7.31 L6.62,4.11Z" fill="#f2c12e"/></g>
<g transform="translate(183.9,226)"><path d="M4.2,1.5 L0.5,14 H15" fill="none" stroke="#f0f0f0" stroke-width="1.3"/><path d="M6,3 C10,3.5 12.5,6 13,11" fill="none" stroke="#f2c12e" stroke-width="1.5"/><path d="M5,2.5 L9,1 L8.5,5Z" fill="#f2c12e"/><path d="M10.5,11 H15.5 L13,13.8Z" fill="#f2c12e"/></g>
<rect x="207" y="225" width="1" height="18" fill="#a3b1c2"/><rect x="209" y="225" width="1" height="18" fill="#a3b1c2"/>
<g transform="translate(214.9,226)"><line x1="3" y1="3" x2="13.5" y2="3" stroke="#f0f0f0" stroke-width="1.3"/><line x1="3" y1="13" x2="13.5" y2="13" stroke="#f0f0f0" stroke-width="1.3"/><path d="M0.5,8 H4.5 M5.5,8 H9.5 M10.5,8 H15.8" fill="none" stroke="#5cb6f2" stroke-width="1.3"/></g>
<g transform="translate(239,226)"><circle cx="7.6" cy="8" r="6.3" fill="none" stroke="#f0f0f0" stroke-width="1.3" stroke-dasharray="6,3.9" stroke-dashoffset="-1"/><line x1="0" y1="8" x2="15.2" y2="8" stroke="#5cb6f2" stroke-width="1.2"/><line x1="7.6" y1="0.5" x2="7.6" y2="15.5" stroke="#5cb6f2" stroke-width="1.2"/><rect x="6.1" y="6.5" width="3" height="3" fill="#5cb6f2"/></g>
<rect x="262" y="225" width="1" height="18" fill="#a3b1c2"/><rect x="264" y="225" width="1" height="18" fill="#a3b1c2"/>
<g transform="translate(270.8,226)"><line x1="0.6" y1="1" x2="0.6" y2="15.5" stroke="#f0f0f0" stroke-width="1.2"/><line x1="14.6" y1="1" x2="14.6" y2="15.5" stroke="#f0f0f0" stroke-width="1.2"/><line x1="2.98" y1="3.50" x2="12.32" y2="3.50" stroke="#f2c12e" stroke-width="1.2"/><path d="M14.00,3.50 L11.20,5.60 L11.20,1.40Z" fill="#f2c12e"/><path d="M1.30,3.50 L4.10,5.60 L4.10,1.40Z" fill="#f2c12e"/><path d="M2,14 L4,11 L5.5,12.5 M6,10 L7.5,8.5 L9,10 M9.5,12.5 L11,11 L13,14" fill="none" stroke="#5cb6f2" stroke-width="1.1"/></g>
<g transform="translate(293.6,226)"><line x1="0.6" y1="1" x2="0.6" y2="15.5" stroke="#f0f0f0" stroke-width="1.2"/><line x1="12.8" y1="1" x2="12.8" y2="15.5" stroke="#f0f0f0" stroke-width="1.2"/><line x1="3.10" y1="4.00" x2="10.20" y2="4.00" stroke="#f2c12e" stroke-width="1.3"/><path d="M12.00,4.00 L9.00,6.25 L9.00,1.75Z" fill="#f2c12e"/><path d="M1.30,4.00 L4.30,6.25 L4.30,1.75Z" fill="#f2c12e"/><path d="M9,8 L5,12 H8 L5.5,16 L11,11 H8 L10.5,8Z" fill="#f2c12e"/></g>
<g transform="translate(315.8,226)"><line x1="0.6" y1="0.5" x2="0.6" y2="16" stroke="#f0f0f0" stroke-width="1.2"/><line x1="14.8" y1="0.5" x2="14.8" y2="9" stroke="#f0f0f0" stroke-width="1.2"/><line x1="8.6" y1="8" x2="8.6" y2="16" stroke="#f0f0f0" stroke-width="1.2"/><line x1="3.10" y1="4.00" x2="12.20" y2="4.00" stroke="#f2c12e" stroke-width="1.3"/><path d="M14.00,4.00 L11.00,6.25 L11.00,1.75Z" fill="#f2c12e"/><path d="M1.30,4.00 L4.30,6.25 L4.30,1.75Z" fill="#f2c12e"/><line x1="2.80" y1="11.50" x2="6.50" y2="11.50" stroke="#f2c12e" stroke-width="1"/><path d="M8.00,11.50 L5.50,13.38 L5.50,9.62Z" fill="#f2c12e"/><path d="M1.30,11.50 L3.80,13.38 L3.80,9.62Z" fill="#f2c12e"/></g>
<g transform="translate(339.8,226)"><line x1="0.6" y1="1" x2="0.6" y2="16" stroke="#f0f0f0" stroke-width="1.2"/><line x1="6.6" y1="1" x2="6.6" y2="16" stroke="#f0f0f0" stroke-width="1.2"/><line x1="15" y1="1" x2="15" y2="16" stroke="#f0f0f0" stroke-width="1.2"/><line x1="9.5" y1="1" x2="9.5" y2="16" stroke="#f0f0f0" stroke-width="1.2"/><path d="M1,5.5 H14.5" fill="none" stroke="#f2c12e" stroke-width="1.1"/><path d="M1,5.5 L4,3.5 V7.5Z M6,5.5 L3,3.5 V7.5Z M10,5.5 L13,3.5 V7.5Z M14.5,5.5 L11.5,3.5 V7.5Z M6.6,5.5 L9.6,3.5 V7.5Z" fill="#f2c12e"/></g>
<g transform="translate(362,226)"><line x1="0.6" y1="0.5" x2="0.6" y2="16" stroke="#f0f0f0" stroke-width="1.2"/><line x1="12" y1="0.5" x2="12" y2="16" stroke="#f0f0f0" stroke-width="1.2"/><line x1="3.22" y1="3.50" x2="9.58" y2="3.50" stroke="#f2c12e" stroke-width="1.3"/><path d="M11.50,3.50 L8.30,5.90 L8.30,1.10Z" fill="#f2c12e"/><path d="M1.30,3.50 L4.50,5.90 L4.50,1.10Z" fill="#f2c12e"/><line x1="3.22" y1="12.50" x2="9.58" y2="12.50" stroke="#f2c12e" stroke-width="1.3"/><path d="M11.50,12.50 L8.30,14.90 L8.30,10.10Z" fill="#f2c12e"/><path d="M1.30,12.50 L4.50,14.90 L4.50,10.10Z" fill="#f2c12e"/><path d="M13,2.5 H15.5 M14.2,2.5 V13.5 M13,13.5 H15.5" fill="none" stroke="#f0f0f0" stroke-width="1.2"/></g>
<g transform="translate(384.4,226)"><line x1="0.6" y1="4.5" x2="0.6" y2="10.5" stroke="#f0f0f0" stroke-width="1.3"/><line x1="1" y1="7.5" x2="4.5" y2="7.5" stroke="#f0f0f0" stroke-width="1.3"/><line x1="14.5" y1="4.5" x2="14.5" y2="10.5" stroke="#f0f0f0" stroke-width="1.3"/><line x1="11" y1="7.5" x2="16" y2="7.5" stroke="#f0f0f0" stroke-width="1.3"/><path d="M1,7.5 L3.5,5.5 V9.5Z M14.5,7.5 L12,5.5 V9.5Z" fill="#f0f0f0"/><line x1="5" y1="12" x2="12" y2="3.5" stroke="#f2c12e" stroke-width="1.1"/></g>
<rect x="409" y="225" width="1" height="18" fill="#a3b1c2"/><rect x="411" y="225" width="1" height="18" fill="#a3b1c2"/>
<g transform="translate(418,226)"><path d="M2,14 L6,10 C7.5,8.5 9,8 10.5,8" fill="none" stroke="#f0f0f0" stroke-width="1.2"/><path d="M1,15 L1.5,11 L5,14.5Z" fill="#f0f0f0"/><path d="M11,0.5 L7,7 H10 L8,12 L13.5,5.5 H10.5 L13,0.5Z" fill="#f2c12e"/></g>
<g transform="translate(440.8,226)"><rect x="0" y="0.5" width="14.2" height="2.2" fill="#f2c12e"/><path d="M0.6,2.7 V15.4 H13.6 V2.7 M7.5,2.7 V15.4" fill="none" stroke="#f0f0f0" stroke-width="1.2"/><path d="M1.8,7.5 H6 M3.9,5.4 V9.6" fill="none" stroke="#f2c12e" stroke-width="1.8"/><path d="M9.5,5.5 L11,4.5 V12 M9.5,12 H12.5" fill="none" stroke="#f0f0f0" stroke-width="1.3"/></g>
<g transform="translate(463,226)"><line x1="0.6" y1="0.5" x2="0.6" y2="15.5" stroke="#f0f0f0" stroke-width="1.2"/><line x1="13.5" y1="0.5" x2="13.5" y2="15.5" stroke="#f0f0f0" stroke-width="1.2"/><line x1="3.10" y1="4.00" x2="11.20" y2="4.00" stroke="#f2c12e" stroke-width="1.3"/><path d="M13.00,4.00 L10.00,6.25 L10.00,1.75Z" fill="#f2c12e"/><path d="M1.30,4.00 L4.30,6.25 L4.30,1.75Z" fill="#f2c12e"/><path d="M7,13 L9.5,15.5 L15.5,9" fill="none" stroke="#5cb6f2" stroke-width="1.7"/></g>
<g transform="translate(485.8,226)"><path d="M0,7 H2.5 L5,4 L8,10 L10.5,5 L12,7 H14" fill="none" stroke="#f2c12e" stroke-width="1.3"/><path d="M14,7 L10.5,4.5 V9.5Z" fill="#f2c12e"/><line x1="15" y1="1" x2="15" y2="15.5" stroke="#f0f0f0" stroke-width="1.2"/></g>
<rect x="510" y="225" width="1" height="18" fill="#a3b1c2"/><rect x="512" y="225" width="1" height="18" fill="#a3b1c2"/>
<g transform="translate(517.7,226)"><line x1="0.6" y1="0.5" x2="0.6" y2="16" stroke="#f0f0f0" stroke-width="1.2"/><line x1="14" y1="0.5" x2="14" y2="8" stroke="#f0f0f0" stroke-width="1.2"/><line x1="3.22" y1="4.00" x2="11.58" y2="4.00" stroke="#f2c12e" stroke-width="1.3"/><path d="M13.50,4.00 L10.30,6.40 L10.30,1.60Z" fill="#f2c12e"/><path d="M1.30,4.00 L4.50,6.40 L4.50,1.60Z" fill="#f2c12e"/><line x1="6" y1="15.5" x2="14.5" y2="7" stroke="#f2c12e" stroke-width="2"/><path d="M5.5,16 L6,14.5 L7,15.5Z" fill="#ff7020"/></g>
<g transform="translate(541,226)"><line x1="0.5" y1="10" x2="4.5" y2="1" stroke="#f0f0f0" stroke-width="1.3"/><line x1="11.5" y1="16" x2="15.8" y2="7" stroke="#f0f0f0" stroke-width="1.3"/><line x1="4.92" y1="7.50" x2="12.08" y2="7.50" stroke="#f2c12e" stroke-width="1.3"/><path d="M14.00,7.50 L10.80,9.90 L10.80,5.10Z" fill="#f2c12e"/><path d="M3.00,7.50 L6.20,9.90 L6.20,5.10Z" fill="#f2c12e"/></g>
<g transform="translate(564,226)"><line x1="0.6" y1="0.5" x2="0.6" y2="16" stroke="#f0f0f0" stroke-width="1.2"/><line x1="15.2" y1="0.5" x2="15.2" y2="5" stroke="#f0f0f0" stroke-width="1.2"/><line x1="15.2" y1="10" x2="15.2" y2="16" stroke="#f0f0f0" stroke-width="1.2"/><path d="M5,6.5 L7.5,0.8 L10,6.5 M6,4.5 H9" fill="none" stroke="#f0f0f0" stroke-width="1.2"/><line x1="6" y1="15.8" x2="14.5" y2="7.5" stroke="#f2c12e" stroke-width="2"/><line x1="3.10" y1="11.00" x2="5.20" y2="11.00" stroke="#f2c12e" stroke-width="1.2"/><path d="M7.00,11.00 L4.00,13.25 L4.00,8.75Z" fill="#f2c12e"/><path d="M1.30,11.00 L4.30,13.25 L4.30,8.75Z" fill="#f2c12e"/></g>
<g transform="translate(588,226)"><line x1="0.6" y1="0.5" x2="0.6" y2="16" stroke="#f0f0f0" stroke-width="1.2"/><line x1="13.5" y1="0.5" x2="13.5" y2="11" stroke="#f0f0f0" stroke-width="1.2"/><line x1="3.10" y1="3.00" x2="11.20" y2="3.00" stroke="#f2c12e" stroke-width="1.3"/><path d="M13.00,3.00 L10.00,5.25 L10.00,0.75Z" fill="#f2c12e"/><path d="M1.30,3.00 L4.30,5.25 L4.30,0.75Z" fill="#f2c12e"/><rect x="5.5" y="6.8" width="4.2" height="4.6" fill="#f2c12e"/><path d="M7,12.5 L9,14.5 H13" fill="none" stroke="#f0f0f0" stroke-width="1"/><path d="M13.5,14.5 L11.5,13 V16Z" fill="#f0f0f0"/><path d="M14,12 V15.5 H15.8" fill="none" stroke="#5cb6f2" stroke-width="1"/></g>
<g transform="translate(610.8,226)"><line x1="0.6" y1="0.5" x2="0.6" y2="15.5" stroke="#f0f0f0" stroke-width="1.2"/><line x1="14.2" y1="0.5" x2="14.2" y2="7" stroke="#f0f0f0" stroke-width="1.2"/><line x1="3.10" y1="3.50" x2="11.90" y2="3.50" stroke="#f2c12e" stroke-width="1.3"/><path d="M13.70,3.50 L10.70,5.75 L10.70,1.25Z" fill="#f2c12e"/><path d="M1.30,3.50 L4.30,5.75 L4.30,1.25Z" fill="#f2c12e"/><path d="M7.5,12.5 C8,10 10.5,9 13,10.5 M14.5,11.5 C14,14 11.5,15 9,13.5" fill="none" stroke="#5cb6f2" stroke-width="1.6"/><path d="M13.5,8 L14.5,11.5 L11,11Z M8.5,16 L7.5,12.5 L11,13Z" fill="#5cb6f2"/></g>
<rect x="634" y="225" width="1" height="18" fill="#a3b1c2"/><rect x="636" y="225" width="1" height="18" fill="#a3b1c2"/>
<g transform="translate(642.4,226)"><path d="M0.6,0.5 H12.4 V11.5 H0.6Z" fill="none" stroke="#5cb6f2" stroke-width="1.2"/><path d="M2,6 V1.5 L4,4 L6,1.5 V6 M7.5,2 H10 L7.5,6 H10" fill="none" stroke="#f0f0f0" stroke-width="1.1"/><rect x="4.8" y="7.6" width="3.2" height="2.3" fill="#f0f0f0"/><rect x="4.8" y="10.8" width="3.2" height="2.3" fill="#f0f0f0"/><rect x="4.8" y="14.0" width="3.2" height="2.3" fill="#f0f0f0"/><rect x="8.8" y="7.6" width="3.2" height="2.3" fill="#f0f0f0"/><rect x="8.8" y="10.8" width="3.2" height="2.3" fill="#f0f0f0"/><rect x="8.8" y="14.0" width="3.2" height="2.3" fill="#f0f0f0"/><rect x="12.8" y="7.6" width="3.2" height="2.3" fill="#f0f0f0"/><rect x="12.8" y="10.8" width="3.2" height="2.3" fill="#f0f0f0"/><rect x="12.8" y="14.0" width="3.2" height="2.3" fill="#f0f0f0"/></g>
<rect x="666" y="225" width="1" height="18" fill="#a3b1c2"/><rect x="668" y="225" width="1" height="18" fill="#a3b1c2"/>
<rect x="825" y="223" width="2" height="25" fill="#a3b1c2"/><rect x="828.8" y="223" width="2" height="25" fill="#a3b1c2"/>
<g transform="translate(837.8,226.5)"><path d="M0,4 L4,0.3 H12 V9 L8,13.7 H0Z" fill="#5cb6f2"/><path d="M0.7,4 H8 V13.5 M8,4 L12,0.5" fill="none" stroke="#3e4550" stroke-width="1"/><path d="M2,1.2 L4.3,1.2" fill="#3e4550"/></g>
<g transform="translate(860.9,226.5)"><path d="M0,3 C0,-1 12,-1 12,3 V12 C12,15.5 0,15.5 0,12Z" fill="#5cb6f2"/><ellipse cx="6" cy="3.2" rx="4" ry="1.3" fill="#3e4550"/></g>
<g transform="translate(883.9,226.5)"><circle cx="6" cy="7.5" r="5.5" fill="none" stroke="#5cb6f2" stroke-width="1.6"/><path d="M2,7 H10 C9,10.5 3,10.5 2,7Z" fill="#5cb6f2"/><line x1="2" y1="6" x2="10" y2="6" stroke="#3e4550" stroke-width="1"/></g>
<g transform="translate(907,226.5)"><path d="M0,1 L12,12.5 V13.3 H0Z" fill="#5cb6f2"/><path d="M1.5,1.2 L12,11.8" fill="none" stroke="#5cb6f2" stroke-width="2.4"/><path d="M1.4,2.8 L10.6,12" fill="none" stroke="#3e4550" stroke-width="0.9"/></g>
<g transform="translate(929.7,226.5)"><path d="M6.3,0.5 L1,10.5 M6.3,0.5 L11.5,10.5 M6.3,0.5 V9.5" fill="none" stroke="#5cb6f2" stroke-width="1.3"/><ellipse cx="6.3" cy="11" rx="5.6" ry="2.6" fill="none" stroke="#5cb6f2" stroke-width="1.5"/><path d="M6.3,9 H11.8 C11.5,12 8,13.5 6.3,13.5Z" fill="#5cb6f2"/></g>
<g transform="translate(952,226.5)"><path d="M7,0.5 L14,9 L7,14Z" fill="#5cb6f2"/><path d="M7,0.5 L0.5,9 L7,14 M7,0.5 V14 M2,9 H7" fill="none" stroke="#5cb6f2" stroke-width="1.3"/></g>
<g transform="translate(975.7,226.5)"><circle cx="6.3" cy="7.2" r="5.8" fill="none" stroke="#5cb6f2" stroke-width="1.5"/><circle cx="6.3" cy="7.2" r="2.6" fill="none" stroke="#5cb6f2" stroke-width="1.5"/></g>
<g transform="translate(997.9,226.5)"><path d="M1,0.5 H13 V2.7 H1Z" fill="#5cb6f2"/><path d="M1,3.7 H13 V5.9 H1Z" fill="#5cb6f2"/><path d="M1,6.9 H13 V9.100000000000001 H1Z" fill="#5cb6f2"/><path d="M1,10.100000000000001 H13 V12.3 H1Z" fill="#5cb6f2"/><path d="M1,13.3 H13 V15.5 H1Z" fill="#5cb6f2"/><path d="M0.5,1 V14 M14,1 V14" fill="none" stroke="#5cb6f2" stroke-width="1"/><line x1="1" y1="2.7" x2="13" y2="3.7" stroke="#3e4550" stroke-width="0.8"/><line x1="1" y1="5.9" x2="13" y2="6.9" stroke="#3e4550" stroke-width="0.8"/><line x1="1" y1="9.100000000000001" x2="13" y2="10.100000000000001" stroke="#3e4550" stroke-width="0.8"/><line x1="1" y1="12.3" x2="13" y2="13.3" stroke="#3e4550" stroke-width="0.8"/></g>
<rect x="1021" y="225" width="1" height="22" fill="#a3b1c2"/><rect x="1023" y="225" width="1" height="22" fill="#a3b1c2"/>
<g transform="translate(1029.7,226.5)"><path d="M0,5 L4,0.5 H14.5 V9.5 L10.5,14 H0Z" fill="#5cb6f2"/><path d="M0.5,5 H10.5 V14 M10.5,5 L14.5,0.8" fill="none" stroke="#f0f0f0" stroke-width="0.9"/><path d="M5.2,12 V7.5 M3.3,9.5 L5.2,7.5 L7.1,9.5" fill="none" stroke="#f0f0f0" stroke-width="1.1"/></g>
<g transform="translate(1052.9,226.5)"><path d="M1.5,3.5 C4,0 10,-0.5 13,2.5" fill="none" stroke="#f0f0f0" stroke-width="1.1"/><path d="M0.5,3.8 L3.5,2 L3,5Z" fill="#f0f0f0"/><path d="M0,6 L3,5 C6,4 8,4 11,5 L14,6 V11 L11,13 C8,11 6,11 3,13 L0,11Z" fill="#5cb6f2"/><path d="M3,5.5 V13 M11,5.5 V13" fill="none" stroke="#f0f0f0" stroke-width="1"/><path d="M5,9 C6,7.5 8,7.5 9,9" fill="none" stroke="#3e4550" stroke-width="1"/></g>
<g transform="translate(1075,226.5)"><path d="M8,0.5 H14 V5 L10,9 H1 L5,4.5 H8Z" fill="#5cb6f2"/><path d="M5,8.8 H15.5 V9.5 L10.5,14.5 H5Z" fill="#5cb6f2"/><path d="M1,8.5 H10.5 M10.5,9 L15,5" fill="none" stroke="#f0f0f0" stroke-width="1"/><rect x="5" y="11" width="3.5" height="3" fill="#f0f0f0"/></g>
<g transform="translate(1100,226.5)"><path d="M0,3 L4,0 V14 L0,11Z" fill="#5cb6f2"/></g>
<rect x="2" y="250" width="2" height="24" fill="#a3b1c2"/><rect x="6" y="250" width="2" height="24" fill="#a3b1c2"/>
<g transform="translate(13.9,253)"><path d="M1,1 V15 H12.5 V1 H1 M1,5 L5,1 M5,5 H12.5 M8,1 V15 M5,5 V15 M1,10 H12.5" fill="none" stroke="#3fd43f" stroke-width="1.2"/><path d="M13,2 C15.5,5 15.5,11 13,14 H14 V2Z" fill="#2a70c0"/></g>
<rect x="37" y="251" width="1" height="19" fill="#a3b1c2"/><rect x="39" y="251" width="1" height="19" fill="#a3b1c2"/>
<g transform="translate(45.6,253)"><path d="M6.5,1 C3,1 1.5,4.5 1,7.5 M0.8,10 C2,13 4,14.5 7,14.5 M10,1.5 L12,2.5" fill="none" stroke="#3fd43f" stroke-width="1.1"/><rect x="4.6" y="2.2" width="4.5" height="6.8" fill="#f2c12e"/><rect x="5.8" y="3.4" width="2.1" height="4.4" fill="#3e4550"/><line x1="1.2" y1="12.5" x2="3.5" y2="14.5" stroke="#f0f0f0" stroke-width="1.2"/><circle cx="12.5" cy="10.5" r="2.8" fill="#3e4550" stroke="#f0f0f0" stroke-width="1.3"/></g>
<g transform="translate(69,253)"><path d="M6.5,1 C3,1 1.5,4.5 1,7.5 M0.8,10 C2,13 4,14.5 7,14.5 M10,1.5 L12,2.5" fill="none" stroke="#3fd43f" stroke-width="1.1"/><rect x="4.6" y="2.2" width="4.5" height="6.8" fill="#f2c12e"/><rect x="5.8" y="3.4" width="2.1" height="4.4" fill="#3e4550"/><line x1="1.2" y1="12.5" x2="3.5" y2="14.5" stroke="#f0f0f0" stroke-width="1.2"/><circle cx="12.3" cy="10.5" r="2.8" fill="#3e4550" stroke="#f2c12e" stroke-width="1.3"/></g>
<g transform="translate(91.9,253)"><path d="M6.5,1 C3,1 1.5,4.5 1,7.5 M0.8,10 C2,13 4,14.5 7,14.5 M10,1.5 L12,2.5" fill="none" stroke="#3fd43f" stroke-width="1.1"/><rect x="4.6" y="2.2" width="4.5" height="6.8" fill="#f2c12e"/><rect x="5.8" y="3.4" width="2.1" height="4.4" fill="#3e4550"/><line x1="1.2" y1="12.5" x2="3.5" y2="14.5" stroke="#f0f0f0" stroke-width="1.2"/><path d="M4.5,9 L7,12 H2Z" fill="#3fd43f"/><circle cx="12.5" cy="10.5" r="2.8" fill="#3e4550" stroke="#f0f0f0" stroke-width="1.3"/></g>
<g transform="translate(114.7,253)"><path d="M6.5,1 C3,1 1.5,4.5 1,7.5 M0.8,10 C2,13 4,14.5 7,14.5 M10,1.5 L12,2.5" fill="none" stroke="#3fd43f" stroke-width="1.1"/><rect x="4.6" y="2.2" width="4.5" height="6.8" fill="#f2c12e"/><rect x="5.8" y="3.4" width="2.1" height="4.4" fill="#3e4550"/><line x1="1.2" y1="12.5" x2="3.5" y2="14.5" stroke="#f0f0f0" stroke-width="1.2"/><path d="M4.5,9 L7,12 H2Z" fill="#3fd43f"/><circle cx="12.3" cy="10.5" r="2.8" fill="#3e4550" stroke="#f2c12e" stroke-width="1.3"/></g>
<rect x="138" y="251" width="1" height="19" fill="#a3b1c2"/><rect x="140" y="251" width="1" height="19" fill="#a3b1c2"/>
<g transform="translate(146.7,253)"><rect x="0.5" y="0.8" width="14.8" height="14.2" fill="#ffffff"/><path d="M0.5,15 H15 V0.8" fill="none" stroke="#f2c12e" stroke-width="1.3"/><line x1="0.5" y1="4.3" x2="15" y2="4.3" stroke="#f2c12e" stroke-width="0.9"/><line x1="0.5" y1="7.8" x2="15" y2="7.8" stroke="#f2c12e" stroke-width="0.9"/><line x1="0.5" y1="11.3" x2="15" y2="11.3" stroke="#f2c12e" stroke-width="0.9"/><line x1="4.2" y1="0.8" x2="4.2" y2="15" stroke="#f2c12e" stroke-width="0.9"/><line x1="7.9" y1="0.8" x2="7.9" y2="15" stroke="#f2c12e" stroke-width="0.9"/><line x1="11.600000000000001" y1="0.8" x2="11.600000000000001" y2="15" stroke="#f2c12e" stroke-width="0.9"/></g>
<g transform="translate(169.9,253)"><rect x="0.5" y="0.8" width="14.8" height="14.2" fill="#6d6a5e"/><path d="M0.5,15 H15 V0.8" fill="none" stroke="#f2c12e" stroke-width="1.3"/><line x1="0.5" y1="4.3" x2="15" y2="4.3" stroke="#c9a22a" stroke-width="0.9"/><line x1="0.5" y1="7.8" x2="15" y2="7.8" stroke="#c9a22a" stroke-width="0.9"/><line x1="0.5" y1="11.3" x2="15" y2="11.3" stroke="#c9a22a" stroke-width="0.9"/><line x1="4.2" y1="0.8" x2="4.2" y2="15" stroke="#c9a22a" stroke-width="0.9"/><line x1="7.9" y1="0.8" x2="7.9" y2="15" stroke="#c9a22a" stroke-width="0.9"/><line x1="11.600000000000001" y1="0.8" x2="11.600000000000001" y2="15" stroke="#c9a22a" stroke-width="0.9"/></g>
<g transform="translate(193,253)"><rect x="0.5" y="0.8" width="14.8" height="14.2" fill="#000000"/><path d="M0.5,15 H15 V0.8" fill="none" stroke="#f2c12e" stroke-width="1.3"/><line x1="0.5" y1="4.3" x2="15" y2="4.3" stroke="#c9a22a" stroke-width="0.9"/><line x1="0.5" y1="7.8" x2="15" y2="7.8" stroke="#c9a22a" stroke-width="0.9"/><line x1="0.5" y1="11.3" x2="15" y2="11.3" stroke="#c9a22a" stroke-width="0.9"/><line x1="4.2" y1="0.8" x2="4.2" y2="15" stroke="#c9a22a" stroke-width="0.9"/><line x1="7.9" y1="0.8" x2="7.9" y2="15" stroke="#c9a22a" stroke-width="0.9"/><line x1="11.600000000000001" y1="0.8" x2="11.600000000000001" y2="15" stroke="#c9a22a" stroke-width="0.9"/></g>
<rect x="216" y="251" width="1" height="19" fill="#a3b1c2"/><rect x="218" y="251" width="1" height="19" fill="#a3b1c2"/>
<g transform="translate(224.4,253)"><path d="M1,1.5 H11.5 V10 H1" fill="none" stroke="#f2c12e" stroke-width="1.3"/><path d="M0,0 H2 V2 H0Z" fill="#3fd43f"/><path d="M12,7 C15,8 16,11 14,13 C12,14.5 10,14 9,12" fill="none" stroke="#f2c12e" stroke-width="1.1"/><path d="M1,16 V12.5 M1,16 H4.5 M1.5,15.5 L5,12" fill="none" stroke="#3fd43f" stroke-width="1.2"/><line x1="1" y1="1.5" x2="1" y2="10" stroke="#6a7a50" stroke-width="1"/></g>
<g transform="translate(247.9,253)"><path d="M0.5,15 L5,13 L12,8 L3,6 L11,2 L14,0.8" fill="none" stroke="#f2c12e" stroke-width="1.2"/><path d="M14.5,0.5 L7,3 L11,6Z" fill="#3fd43f"/><path d="M3,12 L11,8.5 L6,14.5Z" fill="#3fd43f"/><path d="M5,6 L11,7.5 L6,9Z" fill="#3fd43f"/></g>
<g transform="translate(270.1,253)"><line x1="1" y1="13.5" x2="13" y2="2" stroke="#f2c12e" stroke-width="1.3"/><rect x="-0.3" y="11.2" width="4.2" height="4.2" fill="#3fd43f"/><circle cx="12.5" cy="2.6" r="2.3" fill="#3fd43f"/><path d="M0.5,12 L4,15.5 L0.5,15.5Z" fill="#3fd43f"/></g>
<g transform="translate(293.6,253)"><path d="M0.5,4 L11.5,1" fill="none" stroke="#3fd43f" stroke-width="1.1"/><path d="M0.5,7 L11.5,4" fill="none" stroke="#f2c12e" stroke-width="1.1"/><path d="M0.5,10 L11.5,7" fill="none" stroke="#3fd43f" stroke-width="1.1"/><path d="M0.5,13 L11.5,10" fill="none" stroke="#f2c12e" stroke-width="1.1"/><path d="M0.5,15 L11.5,12" fill="none" stroke="#f2c12e" stroke-width="1.3"/><line x1="13.5" y1="3" x2="13.5" y2="14.5" stroke="#f2c12e" stroke-width="1.3"/><path d="M13.5,1 L15.5,4 H11.5Z" fill="#f2c12e"/></g>
<g transform="translate(315.8,253)"><line x1="0.5" y1="15" x2="15.5" y2="1" stroke="#f2c12e" stroke-width="1.3"/><rect x="5.5" y="5" width="5" height="5" transform="rotate(45 8 7.5)" fill="#3fd43f"/></g>
<rect x="340" y="251" width="1" height="19" fill="#a3b1c2"/><rect x="342" y="251" width="1" height="19" fill="#a3b1c2"/>
<g transform="translate(348.7,253)"><path d="M1,11 L5,5.5 L6,10.5 L14,2" fill="none" stroke="#3fd43f" stroke-width="3.2"/><path d="M1,11 L5,5.5 L6,10.5 L14,2" fill="none" stroke="#f2c12e" stroke-width="1.1"/></g>
<g transform="translate(371.5,253)"><path d="M4,1.5 L1.5,4.5 V10.5 L4.5,14 H10.5 L13.5,10.5 V4.5 L11,1.5" fill="none" stroke="#f2c12e" stroke-width="1.1"/><rect x="0.5" y="0.5" width="1.5" height="1.5" fill="#3fd43f"/><rect x="2.5" y="0.5" width="1.5" height="1.5" fill="#3fd43f"/><rect x="12" y="0.5" width="1.5" height="1.5" fill="#3fd43f"/><rect x="14" y="0.5" width="1.5" height="1.5" fill="#3fd43f"/><rect x="0.5" y="13.5" width="1.5" height="1.5" fill="#3fd43f"/><rect x="2.5" y="14" width="1.5" height="1.5" fill="#3fd43f"/><rect x="12" y="14" width="1.5" height="1.5" fill="#3fd43f"/><rect x="14" y="13.5" width="1.5" height="1.5" fill="#3fd43f"/><rect x="0" y="3.5" width="1.5" height="1.5" fill="#3fd43f"/><rect x="14.5" y="3.5" width="1.5" height="1.5" fill="#3fd43f"/></g>
<g transform="translate(394.8,253)"><path d="M2,1.5 H12.5 C14,1.5 14.5,2.5 14.5,4 V12 C14.5,13.5 13.5,14 12.5,14 H2 C0.8,14 0.5,13 0.5,12 V4 C0.5,2.5 1,1.5 2,1.5Z" fill="none" stroke="#f2c12e" stroke-width="1.1"/><rect x="0" y="0.5" width="1.6" height="1.6" fill="#3fd43f"/><rect x="13.5" y="0.5" width="1.6" height="1.6" fill="#3fd43f"/><rect x="0" y="13" width="1.6" height="1.6" fill="#3fd43f"/><rect x="13.5" y="13" width="1.6" height="1.6" fill="#3fd43f"/></g>
<g transform="translate(416.9,253)"><line x1="0.5" y1="9" x2="16" y2="9" stroke="#f2c12e" stroke-width="1.6"/><line x1="8" y1="0.5" x2="8" y2="16" stroke="#f2c12e" stroke-width="1.6"/><path d="M2.5,2 L8,14 L13.5,2" fill="none" stroke="#3fd43f" stroke-width="1.3"/></g>
<g transform="translate(440,253)"><line x1="0.5" y1="9" x2="16" y2="9" stroke="#f2c12e" stroke-width="1.6"/><line x1="8" y1="0.5" x2="8" y2="16" stroke="#f2c12e" stroke-width="1.6"/><path d="M0.5,3 C2,12 4,12 6,6 C8,2 9,2 10,6 C12,12 14,12 15.5,3" fill="none" stroke="#3fd43f" stroke-width="1.2"/></g>
<g transform="translate(463.3,253)"><line x1="0.5" y1="1.5" x2="15.5" y2="1.5" stroke="#f2c12e" stroke-width="1.5"/><line x1="0.5" y1="4.5" x2="15.5" y2="4.5" stroke="#f2c12e" stroke-width="1.5"/><path d="M5.3,7 H10.3 L7.8,10Z" fill="#3fd43f"/><line x1="0.5" y1="11.5" x2="15.5" y2="11.5" stroke="#9fd0ea" stroke-width="1.6"/><line x1="0.5" y1="14.5" x2="15.5" y2="14.5" stroke="#f0f0f0" stroke-width="1.6"/></g>
<g transform="translate(486.3,253)"><line x1="0.5" y1="11" x2="15.5" y2="11" stroke="#f2c12e" stroke-width="1.3"/><line x1="0.5" y1="14" x2="15.5" y2="14" stroke="#c9a22a" stroke-width="1.3"/><path d="M9,8.5 L10,4.5 H13.5 V2.5" fill="none" stroke="#3fd43f" stroke-width="1.5"/><rect x="12" y="2" width="3" height="3" fill="#3fd43f"/></g>
<rect x="510" y="251" width="1" height="19" fill="#a3b1c2"/><rect x="512" y="251" width="1" height="19" fill="#a3b1c2"/>
<g transform="translate(518.6,253)"><path d="M5,2 H1 L3.5,5 L1,8 H5 M7,2 V8 H10" fill="none" stroke="#3fd43f" stroke-width="1.4"/><rect x="12" y="2.3" width="2.6" height="2.6" fill="#3fd43f"/><rect x="11.5" y="6" width="2" height="1" fill="#f2c12e"/><rect x="1" y="11" width="2.5" height="2.5" fill="#3fd43f"/><path d="M4,11.5 L6,12.5 L8.5,12 L11,13.5" fill="none" stroke="#f2c12e" stroke-width="1"/><rect x="12.5" y="13" width="3" height="3" fill="#3fd43f"/></g>
<g transform="translate(541.5,253)"><path d="M0.5,11.5 V14 M0.5,12.8 H15.5 M15.5,11.5 V14 M3.5,12.8 C3,10 5,10 6,9 M9.5,12.8 C9.5,11 11,11 12,10" fill="none" stroke="#f2c12e" stroke-width="1.3"/><path d="M12,0.5 L14,3 L12,5.5 L10,3Z" fill="#3fd43f"/></g>
<g transform="translate(564.4,253)"><path d="M1,3 V15 H11.5 V3Z" fill="none" stroke="#f2c12e" stroke-width="1.3"/><path d="M1,2 H12 M13.5,3 V15 M12.5,1.5 L14,1" fill="none" stroke="#3fd43f" stroke-width="1"/><line x1="5" y1="7" x2="8" y2="10" stroke="#3fd43f" stroke-width="1"/></g>
<rect x="588" y="251" width="1" height="19" fill="#a3b1c2"/><rect x="590" y="251" width="1" height="19" fill="#a3b1c2"/>
<g transform="translate(596.7,253)"><ellipse cx="5.5" cy="4.5" rx="5" ry="3.5" fill="none" stroke="#3fd43f" stroke-width="1.3"/><ellipse cx="10" cy="11.5" rx="5" ry="3.5" fill="none" stroke="#f2c12e" stroke-width="1.3"/></g>
<g transform="translate(620.1,253)"><path d="M1,2 V14.5 H12" fill="none" stroke="#f2c12e" stroke-width="1.3"/><path d="M1,2 H4 C9,2 13,6 14,12.5" fill="none" stroke="#3fd43f" stroke-width="1.3"/><rect x="11.5" y="13.5" width="2.5" height="1.5" fill="#f2c12e"/><rect x="13" y="0.5" width="1" height="1" fill="#3fd43f"/></g>
<g transform="translate(641.7,253)"><path d="M0.5,0.5 H9 V6 H0.5Z M0.5,10 H9 V15 H0.5Z" fill="none" stroke="#f2c12e" stroke-width="1.1"/><path d="M0.5,10 H9 V15 H0.5Z" fill="none" stroke="#3fd43f" stroke-width="1.1"/><path d="M11,2 H15.5 V15 H11Z" fill="none" stroke="#3fd43f" stroke-width="1.2"/><line x1="0.5" y1="7" x2="9" y2="7" stroke="#f2c12e" stroke-width="1.3"/></g>
<g transform="translate(665.4,253)"><path d="M4,3 L6,1 H12 L14,3 V14.5 H8" fill="none" stroke="#f2c12e" stroke-width="1.3"/><rect x="5" y="3" width="7" height="1.5" fill="#3fd43f"/><path d="M1,9 H7.5 V14.5 H1Z" fill="none" stroke="#3fd43f" stroke-width="1.3"/><path d="M2.5,9 V7 C2.5,5 6,5 6,7 V9" fill="none" stroke="#3fd43f" stroke-width="1.2"/><line x1="10" y1="9" x2="12" y2="11" stroke="#6aa060" stroke-width="1"/></g>
<g transform="translate(687.1,253)"><path d="M0.5,4 H16 V10 H0.5Z" fill="none" stroke="#f2c12e" stroke-width="1.1"/><path d="M0.5,4 L6,9 L10,6" fill="none" stroke="#3fd43f" stroke-width="1.2"/><rect x="0.5" y="11" width="8" height="1.2" fill="#c9a22a"/></g>
<g transform="translate(710.6,253)"><rect x="0" y="0.5" width="1.6" height="2.2" fill="#3fd43f"/><rect x="2.6" y="0.5" width="1.6" height="2.2" fill="#3fd43f"/><path d="M7,0.5 H16 V3.8 H7Z" fill="none" stroke="#f2c12e" stroke-width="1.1"/><rect x="0" y="5.8" width="1.6" height="2.2" fill="#3fd43f"/><rect x="2.6" y="5.8" width="1.6" height="2.2" fill="#3fd43f"/><path d="M7,5.8 H16 V9.1 H7Z" fill="none" stroke="#f2c12e" stroke-width="1.1"/><rect x="0" y="11.1" width="1.6" height="2.2" fill="#3fd43f"/><rect x="2.6" y="11.1" width="1.6" height="2.2" fill="#3fd43f"/><path d="M7,11.1 H16 V14.399999999999999 H7Z" fill="none" stroke="#f2c12e" stroke-width="1.1"/></g>
<g transform="translate(733.6,253)"><path d="M0.5,6 L8.5,1.5 L16.5,6 V14.5 L8.5,10 L0.5,14.5Z M8.5,1.5 V10" fill="none" stroke="#f2c12e" stroke-width="1.4"/></g>
<rect x="758" y="251" width="1" height="19" fill="#a3b1c2"/><rect x="760" y="251" width="1" height="19" fill="#a3b1c2"/>
<g transform="translate(769.5,253)"><circle cx="4.5" cy="3.5" r="3" fill="none" stroke="#3fd43f" stroke-width="1.2"/><rect x="2.5" y="2.5" width="4" height="2" fill="#f2c12e"/><line x1="4.5" y1="6.5" x2="4.5" y2="15.5" stroke="#f2c12e" stroke-width="1.2"/><line x1="4.5" y1="12" x2="6.5" y2="12" stroke="#3fd43f" stroke-width="1"/><path d="M4.5,16 L3,14 H6Z" fill="#3fd43f"/></g>
<g transform="translate(789.4,253)"><path d="M0,7 L8,0.5 L16.5,5.5 V10 L9,16 L0.5,10.5Z" fill="#32b832"/><path d="M0.5,5.5 L8.5,0 L16,5 L8,11Z" fill="#48d448"/><path d="M6,3.5 C6,1.5 10,1.5 10,3.5 C10,5 8,5 8,6.5 M8,7.5 V8.5" fill="none" stroke="#f2c12e" stroke-width="1.1"/><path d="M9,11 L16,6.5 M9,13 L16,8.5" fill="none" stroke="#3fd43f" stroke-width="0.8"/></g><path d="M784,231 H791.6 L787.8,235.2Z" fill="#f0f0f0"/></svg>
<!-- ===== LEFT TOOLBAR ===== -->
<div class="a" style="left:1px;top:278px;width:1px;height:423px;background:#a3b1c2"></div>
<div class="a" style="left:1px;top:278px;width:27px;height:2px;background:#a3b1c2"></div>
<div class="a" style="left:1px;top:282px;width:27px;height:2px;background:#a3b1c2"></div>
<div class="a" style="left:29px;top:278px;width:1px;height:423px;background:#a3b1c2"></div>
<div class="a" style="left:29px;top:278px;width:27px;height:2px;background:#a3b1c2"></div>
<div class="a" style="left:29px;top:282px;width:27px;height:2px;background:#a3b1c2"></div>
<div class="a" style="left:57px;top:278px;width:1px;height:423px;background:#a3b1c2"></div>
<div class="a" style="left:57px;top:278px;width:27px;height:2px;background:#a3b1c2"></div>
<div class="a" style="left:57px;top:282px;width:27px;height:2px;background:#a3b1c2"></div>
<div class="a" style="left:84px;top:277px;width:3px;height:424px;background:#3a414b"></div>
<svg style="left:0;top:0" width="100" height="728"><g transform="translate(6,288.5)"><line x1="2" y1="2.5" x2="14" y2="14.5" stroke="#f0f0f0" stroke-width="1.1"/><rect x="0.3999999999999999" y="0.8999999999999999" width="3.2" height="3.2" fill="#2ebef6"/><rect x="12.9" y="12.9" width="3.2" height="3.2" fill="#2ebef6"/></g>
<g transform="translate(6,310.5)"><path d="M2.5,2.5 L14.5,14.5" fill="none" stroke="#f0f0f0" stroke-dasharray="1.6,1.6" stroke-width="1.2"/><path d="M1,1 L5,2 L2,5Z" fill="#5cb6f2"/><path d="M15.5,15.5 L11.5,14.5 L14.5,11.5Z" fill="#5cb6f2"/><rect x="7.5" y="7.5" width="2" height="2" fill="#2ebef6"/></g>
<g transform="translate(6,332.5)"><path d="M10.5,2 C5,2 2,4.5 2,8 C2,12 5,14 8,14 H13.5" fill="none" stroke="#f0f0f0" stroke-width="1.3"/><rect x="9.4" y="0.8999999999999999" width="3.2" height="3.2" fill="#2ebef6"/><rect x="6.4" y="12.4" width="3.2" height="3.2" fill="#2ebef6"/><rect x="12.200000000000001" y="12.4" width="3.2" height="3.2" fill="#2ebef6"/></g>
<g transform="translate(6,354.5)"><path d="M8,1.5 L14.5,6.5 L12,14.5 H4 L1.5,6.5Z" fill="none" stroke="#f0f0f0" stroke-width="1.4"/></g>
<g transform="translate(6,376.5)"><path d="M2.5,3 H13.5 V13.5 H2.5Z" fill="none" stroke="#f0f0f0" stroke-width="1.3"/><rect x="0.8999999999999999" y="1.4" width="3.2" height="3.2" fill="#2ebef6"/><rect x="11.9" y="11.9" width="3.2" height="3.2" fill="#2ebef6"/></g>
<g transform="translate(6,398.5)"><path d="M2,14.5 C3,8 7,4 13.5,3" fill="none" stroke="#f0f0f0" stroke-width="1.3"/><rect x="0.3999999999999999" y="12.9" width="3.2" height="3.2" fill="#2ebef6"/><rect x="4.9" y="4.9" width="3.2" height="3.2" fill="#2ebef6"/><rect x="11.9" y="1.4" width="3.2" height="3.2" fill="#2ebef6"/><path d="M10,14.5 H15 V10Z" fill="#f0f0f0"/></g>
<g transform="translate(6,420.5)"><circle cx="7.5" cy="8" r="6.6" fill="none" stroke="#f0f0f0" stroke-width="1.2"/><rect x="7.5" y="7.3" width="8" height="1.4" fill="#f0f0f0"/><rect x="6.4" y="6.4" width="3.2" height="3.2" fill="#2ebef6"/><rect x="12.4" y="6.4" width="3.2" height="3.2" fill="#2ebef6"/></g>
<g transform="translate(6,442.5)"><path d="M3,6 C2,3 6,2 8,3 C10,1.5 13,2 14,4 C16,5 16,8 14,9.5 C14,12 11,13.5 9,12 C7,14 3,13.5 3,11 C0.5,10 0.5,7 3,6Z" fill="none" stroke="#f0f0f0" stroke-width="1.1"/></g>
<g transform="translate(6,464.5)"><path d="M1.5,6 C4,0 6,1 8,4 C10,7 12,8 14.5,2" fill="none" stroke="#f0f0f0" stroke-width="1.3"/><rect x="0.19999999999999996" y="4.7" width="2.6" height="2.6" fill="#2ebef6"/><rect x="5.2" y="1.2" width="2.6" height="2.6" fill="#2ebef6"/><rect x="9.7" y="5.2" width="2.6" height="2.6" fill="#2ebef6"/><rect x="13.2" y="1.2" width="2.6" height="2.6" fill="#2ebef6"/><path d="M10.5,15 H15.5 V10Z" fill="#f0f0f0"/></g>
<g transform="translate(6,486.5)"><ellipse cx="8" cy="8.2" rx="7" ry="6" fill="none" stroke="#f0f0f0" stroke-width="1.3"/><rect x="6.3" y="0.5000000000000002" width="3.4" height="3.4" fill="#2ebef6"/><rect x="-0.5" y="6.499999999999999" width="3.4" height="3.4" fill="#2ebef6"/><rect x="13.100000000000001" y="6.499999999999999" width="3.4" height="3.4" fill="#2ebef6"/></g>
<g transform="translate(6,508.5)"><path d="M7.5,2 C3,2 1,5 1,8 C1,12 4.5,14 8,14 C11,14 13.5,12 14.5,9" fill="none" stroke="#f0f0f0" stroke-width="1.3"/><rect x="6.4" y="0.3999999999999999" width="3.2" height="3.2" fill="#2ebef6"/><rect x="12.9" y="6.9" width="3.2" height="3.2" fill="#2ebef6"/></g>
<g transform="translate(6,530.5)"><path d="M3,15 C1,13.5 1,11.5 2.5,10 L10.5,2 C12,0.5 14,0.5 15,2 C16,3.5 15.5,5 14.5,6 L6,14.5 C5,15.5 4,15.5 3,15Z" fill="none" stroke="#f0f0f0" stroke-width="1.1"/><rect x="3.4" y="10.4" width="2.2" height="2.2" fill="#2ebef6"/><rect x="10.9" y="3.4" width="2.2" height="2.2" fill="#2ebef6"/><rect x="12.9" y="0.3999999999999999" width="2.2" height="2.2" fill="#2ebef6"/></g>
<g transform="translate(6,552.5)"><path d="M2,3 V1 H13.5 V12" fill="none" stroke="#f0f0f0" stroke-width="1.2"/><path d="M2,6.5 V3.5 H5" fill="none" stroke="#5cb6f2" stroke-width="1.2"/><path d="M5,3.5 H11 M9,1.5 L11,3.5 L9,5.5" fill="none" stroke="#f2c12e" stroke-width="1.1"/><circle cx="6" cy="10" r="2.8" fill="none" stroke="#f0f0f0" stroke-width="1.2"/><line x1="9" y1="10" x2="11" y2="10" stroke="#f0f0f0" stroke-width="1.1"/><path d="M10,15 H15 V10Z" fill="#f0f0f0"/></g>
<g transform="translate(6,574.5)"><path d="M2,5 V12.5 H5 M2,2 V1 M4,1.5 H12.5 V5" fill="none" stroke="#f0f0f0" stroke-width="1.2"/><rect x="0.8999999999999999" y="1.1" width="2.2" height="2.2" fill="#2ebef6"/><circle cx="10.5" cy="10.5" r="4.3" fill="none" stroke="#f0f0f0" stroke-width="1.2"/></g>
<g transform="translate(6,596.5)"><rect x="1.85" y="1.85" width="2.3" height="2.3" fill="#2ebef6"/><rect x="11.35" y="1.85" width="2.3" height="2.3" fill="#2ebef6"/><rect x="6.65" y="6.85" width="2.3" height="2.3" fill="#2ebef6"/><rect x="1.85" y="11.85" width="2.3" height="2.3" fill="#2ebef6"/><rect x="11.35" y="11.85" width="2.3" height="2.3" fill="#2ebef6"/></g>
<g transform="translate(6,618.5)"><path d="M1.5,1.5 H14.5 V14.5 H1.5Z" fill="none" stroke="#f0f0f0" stroke-width="1.2"/><path d="M3,8 L8,3 M3,12 L12,3 M6,13 L13,6 M10,13 L13,10" fill="none" stroke="#5cb6f2" stroke-width="1.4"/></g>
<g transform="translate(6,640.5)"><path d="M1.3,1.3 H14.7 V14.7 H1.3Z" fill="none" stroke="#5cb6f2" stroke-width="1.3"/><circle cx="8" cy="8" r="3.6" fill="none" stroke="#5cb6f2" stroke-width="1.3"/></g>
<g transform="translate(6,662.5)"><rect x="0.5" y="0.8" width="15" height="2" fill="#6cc070"/><rect x="0.5" y="4.5" width="4.1" height="4.2" fill="#e2e2e2"/><rect x="0.5" y="9.8" width="4.1" height="4.2" fill="#e2e2e2"/><rect x="5.7" y="4.5" width="4.1" height="4.2" fill="#e2e2e2"/><rect x="5.7" y="9.8" width="4.1" height="4.2" fill="#e2e2e2"/><rect x="10.9" y="4.5" width="4.1" height="4.2" fill="#e2e2e2"/><rect x="10.9" y="9.8" width="4.1" height="4.2" fill="#e2e2e2"/></g>
<g transform="translate(6,684.5)"><path d="M1.5,1.5 H14.5 V14.5 H1.5Z" fill="none" stroke="#f0f0f0" stroke-width="1.3"/><path d="M3.5,7 L5.5,3.8 L7.5,7 M4,5.8 H7" fill="none" stroke="#f2c12e" stroke-width="1.3"/><rect x="9" y="4" width="4" height="1.2" fill="#c9e2f8"/><rect x="9" y="6" width="4" height="1.2" fill="#c9e2f8"/><rect x="3.5" y="9" width="9.5" height="1.2" fill="#c9e2f8"/><rect x="3.5" y="11.5" width="9.5" height="1.2" fill="#c9e2f8"/></g>
<g transform="translate(34,288.5)"><rect x="1" y="5" width="15" height="7.5" rx="3.5" transform="rotate(-38 8.5 8.5)" fill="#f0f0f0"/><path d="M8.6,3.3 L11.6,0.9 C13.5,-0.5 16,1 16.2,3 C16.4,4.5 15.5,5.5 14.5,6.3 L11.5,8.6Z" fill="#5cb6f2"/></g>
<g transform="translate(34,310.5)"><path d="M1.5,12 V1.5 H12" fill="none" stroke="#f0f0f0" stroke-width="1.3"/><path d="M4.5,4.5 H15 V15 H4.5Z" fill="none" stroke="#5cb6f2" stroke-width="1.3"/><path d="M7,10 H12.5 M9.75,7 V13" fill="none" stroke="#f2c12e" stroke-width="1.3"/></g>
<g transform="translate(34,332.5)"><path d="M6.5,2 V14.5 H1.5Z" fill="#f0f0f0"/><path d="M5,6.5 V12.5 H2.8Z" fill="#3e4550"/><rect x="7.4" y="0.5" width="1.2" height="15.5" fill="#f0f0f0"/><path d="M9.5,2 L14.5,14.5 H9.5Z" fill="#e8b552"/></g>
<g transform="translate(34,354.5)"><path d="M3,13 C0,12 0,8 2.5,7 C2,4 5,1 8.5,2.5 C11,1.5 13,3.5 12.5,6 H15.5 V13Z" fill="none" stroke="#f0f0f0" stroke-width="1.3"/><path d="M5,8.5 V11.5 H15 M7,8 H12 M5,12.5 H15" fill="none" stroke="#f2c12e" stroke-width="1.3"/></g>
<g transform="translate(34,376.5)"><rect x="0.5" y="0.5" width="6.6" height="6.6" fill="#f2a71e"/><rect x="8.6" y="0.5" width="6.6" height="6.6" fill="#c9e2f8"/><rect x="0.5" y="8.6" width="6.6" height="6.6" fill="#c9e2f8"/><rect x="8.6" y="8.6" width="6.6" height="6.6" fill="#c9e2f8"/><path d="M10,15.2 H15.2 V10Z" fill="#f0f0f0"/></g>
<g transform="translate(34,398.5)"><path d="M8,1.5 V14.5 M1.5,8 H14.5" fill="none" stroke="#c9e2f8" stroke-width="1.6"/><path d="M8,0 L11,3.5 H5Z M8,16 L11,12.5 H5Z M0,8 L3.5,5 V11Z M16,8 L12.5,5 V11Z" fill="#c9e2f8"/></g>
<g transform="translate(34,420.5)"><path d="M10.5,3.5 C5,1 1.5,5 1.5,9 C1.5,12.5 4.5,15 8,15 C11.5,15 14.5,12.5 14.5,9" fill="none" stroke="#f0f0f0" stroke-width="1.4"/><path d="M9,0 L13,3 L9,6Z" fill="#f0f0f0"/></g>
<g transform="translate(34,442.5)"><path d="M1.5,1.5 H14.5 V8 M1.5,1.5 V14.5 H8" fill="none" stroke="#f0f0f0" stroke-width="1.3"/><rect x="7" y="10" width="2.5" height="2.5" fill="#f2c12e"/><path d="M10,10 H14.5 V14.5 H10Z" fill="none" stroke="#f0f0f0" stroke-dasharray="1.5,1" stroke-width="1.1"/></g>
<g transform="translate(34,464.5)"><path d="M1.5,2 H14.5 M1.5,14 H14.5" fill="none" stroke="#f0f0f0" stroke-width="1.3"/><path d="M1.5,2 V14 M14.5,2 V14" fill="none" stroke="#5cb6f2" stroke-dasharray="1.5,1.5" stroke-width="1.1"/><path d="M8,3 L12,7.5 H9.5 V12 H6.5 V7.5 H4Z" fill="#e8b552"/></g>
<g transform="translate(34,486.5)"><path d="M0.5,8 H7" fill="none" stroke="#5cb6f2" stroke-dasharray="1.3,1.3" stroke-width="1.2"/><line x1="8" y1="8" x2="15" y2="8" stroke="#f0f0f0" stroke-width="1.3"/><line x1="5" y1="14" x2="11" y2="1" stroke="#d4a830" stroke-width="1.4"/></g>
<g transform="translate(34,508.5)"><line x1="0.5" y1="8" x2="6" y2="8" stroke="#f0f0f0" stroke-width="1.3"/><path d="M6.5,8 H11" fill="none" stroke="#5cb6f2" stroke-dasharray="1.3,1.3" stroke-width="1.2"/><line x1="10" y1="14.5" x2="15" y2="2" stroke="#d4a830" stroke-width="1.4"/></g>
<g transform="translate(34,530.5)"><path d="M1.5,2 H14 V14.5 H1.5Z" fill="none" stroke="#f0f0f0" stroke-width="1.3"/><rect x="3.3" y="1.0999999999999999" width="2.4" height="2.4" fill="#2ebef6"/></g>
<g transform="translate(34,552.5)"><path d="M1.5,1.5 V14.5 H14.5 V1.5" fill="none" stroke="#f0f0f0" stroke-width="1.3"/><rect x="3.8" y="1.0999999999999999" width="2.4" height="2.4" fill="#2ebef6"/><rect x="9.3" y="1.0999999999999999" width="2.4" height="2.4" fill="#2ebef6"/></g>
<g transform="translate(34,574.5)"><path d="M1,14.5 V7 M14.5,14.5 V7" fill="none" stroke="#f0f0f0" stroke-width="1.3"/><path d="M0.5,3 H5 M3,1 L5,3 L3,5 M15.5,3 H11 M13,1 L11,3 L13,5" fill="none" stroke="#f2c12e" stroke-width="1.2"/><rect x="6.7" y="1.7" width="2.6" height="2.6" fill="#2ebef6"/></g>
<g transform="translate(34,596.5)"><path d="M14.5,2 V14.5 H1.5" fill="none" stroke="#f0f0f0" stroke-width="1.3"/><path d="M1.5,14.5 V1.5 H14" fill="none" stroke="#5cb6f2" stroke-dasharray="1.5,1.5" stroke-width="1.1"/><line x1="1.5" y1="13" x2="13.5" y2="1.5" stroke="#e8b552" stroke-width="1.3"/></g>
<g transform="translate(34,618.5)"><path d="M14.5,3 V14.5 H1.5" fill="none" stroke="#f0f0f0" stroke-width="1.3"/><path d="M1.5,12 V1.5 H4" fill="none" stroke="#5cb6f2" stroke-dasharray="1.5,1.5" stroke-width="1.1"/><path d="M1.5,14 C1.5,7 5,2.5 13,1.5" fill="none" stroke="#f2c12e" stroke-width="1.4"/></g>
<g transform="translate(34,640.5)"><path d="M0.5,8.5 C2,4 4,4 6,8" fill="none" stroke="#f0f0f0" stroke-width="1.6"/><path d="M6,8 C8,12 10,12 11.5,8" fill="none" stroke="#f2c12e" stroke-width="1.6"/><path d="M11.5,8 C13,4 14.5,4 15.5,6" fill="none" stroke="#f0f0f0" stroke-width="1.6"/></g>
<g transform="translate(34,662.5)"><circle cx="6.5" cy="10" r="6" fill="#c5d1df"/><path d="M10,5 C11,3.5 12,3 13,4" fill="none" stroke="#f0f0f0" stroke-width="1"/><circle cx="13" cy="3" r="1.8" fill="none" stroke="#f2c12e" stroke-width="1.2"/><path d="M13,-0.5 V0.5 M13,5.5 V6.5 M9.5,3 H10.5 M15.5,3 H16.5" fill="none" stroke="#f2c12e" stroke-width="1"/></g>
<g transform="translate(34,684.5)"><path d="M1,1 H13 V13 H1Z M1,5 H13 M5,1 V16" fill="none" stroke="#5cb6f2" stroke-width="1.3"/><circle cx="5" cy="5" r="1.6" fill="#3e4550" stroke="#5cb6f2" stroke-width="1"/><path d="M8.5,13 C9,10.5 11,10.5 12,11.5 L13,12.5 C13,14 12,16 9,15.5Z" fill="#5cb6f2"/><path d="M12,11 L15,8 L16.5,9.5 L13.5,12.5Z" fill="#9aa3ad"/></g>
<g transform="translate(62.5,288.5)"><rect x="0.7000000000000002" y="6.5" width="3" height="3" fill="#2ebef6"/><line x1="3.5" y1="8" x2="12.5" y2="8" stroke="#5cb6f2" stroke-width="1.2"/><rect x="12.5" y="6.5" width="3" height="3" fill="#e8453c"/></g>
<g transform="translate(62.5,310.5)"><path d="M3,14 V5 M3,5 H11" fill="none" stroke="#f0f0f0" stroke-width="1.2"/><rect x="1.5" y="12.5" width="3" height="3" fill="#2ebef6"/><rect x="11.5" y="3.5" width="3" height="3" fill="#e8453c"/><line x1="3" y1="7" x2="3" y2="12" stroke="#3e4550" stroke-width="0.6"/></g>
<g transform="translate(62.5,332.5)"><line x1="2" y1="14" x2="14" y2="2" stroke="#f0f0f0" stroke-width="1.2"/><rect x="0.5" y="12.5" width="3" height="3" fill="#e8453c"/><rect x="12.5" y="0.5" width="3" height="3" fill="#e8453c"/></g>
<g transform="translate(62.5,354.5)"><line x1="1" y1="15" x2="15" y2="1" stroke="#f0f0f0" stroke-width="1.2"/><rect x="6.5" y="6.5" width="3" height="3" fill="#e8453c"/></g>
<g transform="translate(62.5,376.5)"><line x1="1.5" y1="1.5" x2="14.5" y2="14.5" stroke="#f0f0f0" stroke-width="1.1"/><line x1="14.5" y1="1.5" x2="1.5" y2="14.5" stroke="#f0f0f0" stroke-width="1.1"/><rect x="6.5" y="6.5" width="3" height="3" fill="#e8453c"/></g>
<g transform="translate(62.5,398.5)"><line x1="1.5" y1="1.5" x2="14.5" y2="14.5" stroke="#f0f0f0" stroke-width="1.1"/><line x1="14.5" y1="1.5" x2="1.5" y2="14.5" stroke="#f0f0f0" stroke-width="1.1"/><rect x="6.5" y="6.5" width="3" height="3" fill="#e8453c"/></g>
<g transform="translate(62.5,420.5)"><rect x="0.5" y="6.5" width="3" height="3" fill="#e8453c"/><line x1="3" y1="8" x2="7.5" y2="8" stroke="#f0f0f0" stroke-width="1.2"/><path d="M8.5,8 H15.5" fill="none" stroke="#5cb6f2" stroke-dasharray="1.2,1.2" stroke-width="1.2"/></g>
<g transform="translate(62.5,442.5)"><circle cx="8" cy="8" r="6" fill="none" stroke="#f0f0f0" stroke-width="1.2"/><rect x="7.0" y="7.0" width="2" height="2" fill="#e8453c"/></g>
<g transform="translate(62.5,464.5)"><path d="M1.5,1.5 H13.5 V13.5 H1.5Z" fill="none" stroke="#f0f0f0" stroke-width="1.2"/><rect x="6.5" y="6.5" width="2" height="2" fill="#e8453c"/></g>
<g transform="translate(62.5,486.5)"><circle cx="8" cy="8" r="5.8" fill="none" stroke="#d0d4d8" stroke-width="1.1" stroke-dasharray="2,1.7"/><rect x="6.8" y="1.0000000000000002" width="2.4" height="2.4" fill="#e8453c"/><rect x="1.0000000000000002" y="6.8" width="2.4" height="2.4" fill="#e8453c"/><rect x="12.600000000000001" y="6.8" width="2.4" height="2.4" fill="#e8453c"/><rect x="6.8" y="12.600000000000001" width="2.4" height="2.4" fill="#e8453c"/></g>
<g transform="translate(62.5,508.5)"><path d="M13,4.5 C11.5,2 9.5,1.5 8,1.5 C4,1.5 1.5,4.5 1.5,8 C1.5,11.5 4,14.5 8,14.5 C9.5,14.5 11.5,14 13,11.5" fill="none" stroke="#f0f0f0" stroke-width="1.3"/><line x1="14" y1="1" x2="14" y2="15" stroke="#f0f0f0" stroke-width="1.2"/><rect x="11.9" y="6.9" width="2.2" height="2.2" fill="#e8453c"/></g>
<g transform="translate(62.5,530.5)"><line x1="8" y1="1" x2="8" y2="14.5" stroke="#f0f0f0" stroke-width="1.2"/><line x1="1" y1="14.5" x2="15" y2="14.5" stroke="#f0f0f0" stroke-width="1.2"/><rect x="6.8" y="13.3" width="2.4" height="2.4" fill="#e8453c"/></g>
<g transform="translate(62.5,552.5)"><line x1="1" y1="12" x2="12" y2="1" stroke="#f0f0f0" stroke-width="1.2"/><line x1="4" y1="15" x2="15" y2="4" stroke="#f0f0f0" stroke-width="1.2"/></g>
<g transform="translate(62.5,574.5)"><path d="M1,1 H8 V5 H15 V15 H7 V11 H1Z" fill="#c9e2f8"/><path d="M1,1 H8 V5 H15 V15 H7 V11 H1Z" fill="none" stroke="#f0f0f0" stroke-width="0.8"/></g>
<g transform="translate(62.5,596.5)"><rect x="4.5" y="6.5" width="3" height="3" fill="#e8453c"/></g>
<g transform="translate(62.5,618.5)"><line x1="1" y1="15" x2="15" y2="1" stroke="#f0f0f0" stroke-width="1.1"/><rect x="6.5" y="6.5" width="3" height="3" fill="#e8453c"/><rect x="10.0" y="10.0" width="2" height="2" fill="#2ebef6"/></g>
<g transform="translate(62.5,640.5)"><path d="M2.5,13 V8 C2.5,4 5,1.5 8,1.5 C11,1.5 13.5,4 13.5,8 V10" fill="none" stroke="#f0f0f0" stroke-width="2.4"/><rect x="1.5" y="11.5" width="2.5" height="3" fill="#c9e2f8"/><path d="M11,11 L15,15 M15,11 L11,15" fill="none" stroke="#e8453c" stroke-width="1.2"/></g>
<g transform="translate(62.5,662.5)"><path d="M3,12 V8 C3,4 5.5,1.5 8,1.5 C10.5,1.5 13,4 13,8 V12" fill="none" stroke="#f0f0f0" stroke-width="3"/><rect x="1.3" y="11.5" width="3.5" height="3.3" fill="#f0f0f0"/><rect x="11.2" y="11.5" width="3.5" height="3.3" fill="#f0f0f0"/></g></svg>
<!-- ===== DRAWING ===== -->
<div class="t" style="left:90.90px;top:283px;font-size:12px;transform:scaleX(0.8951);transform-origin:0 0;color:#dfe3e8">[−] [Góra] [2D druty] [GUW]</div>
<svg style="left:0;top:0" width="1105" height="728">
<path d="M381.63,544.70 L632.33,411.10 A44.3,44.3 0 0 0 590.67,332.90 L339.97,466.50 A44.3,44.3 0 0 0 381.63,544.70Z" fill="none" stroke="#e8e8e8" stroke-width="1.25"/>
<path d="M589.90,586.96 L842.10,449.96 A44.0,44.0 0 0 0 800.10,372.64 L547.90,509.64 A44.0,44.0 0 0 0 589.90,586.96Z" fill="none" stroke="#e8e8e8" stroke-width="1.25"/>
<path d="M421.92,355.67 L600.82,612.57 A21.3,21.3 0 0 0 635.78,588.23 L456.88,331.33 A21.3,21.3 0 0 0 421.92,355.67Z" fill="none" stroke="#e8e8e8" stroke-width="1.25"/>
<path d="M381.28,544.03 L631.98,410.43 A43.55,43.55 0 0 0 591.02,333.57 L340.32,467.17 A43.55,43.55 0 0 0 381.28,544.03Z" fill="#1f2730"/>
<path d="M589.54,586.30 L841.74,449.30 A43.25,43.25 0 0 0 800.46,373.30 L548.26,510.30 A43.25,43.25 0 0 0 589.54,586.30Z" fill="#1f2730"/>
<path d="M422.54,355.24 L601.44,612.14 A20.55,20.55 0 0 0 635.16,588.66 L456.26,331.76 A20.55,20.55 0 0 0 422.54,355.24Z" fill="#1f2730"/>
<rect x="567.5" y="493.5" width="7.5" height="7.5" fill="none" stroke="#d8d8d8" stroke-width="1"/><path d="M571.3,493.5 V501 M567.5,497.2 H575" stroke="#d8d8d8" stroke-width="0.8"/><path d="M571.3,493.5 V454 M568,462.9 L571.3,454 L574.8,462.9 M575,497 H614 M605,493.7 L614,497 L605,500.4" fill="none" stroke="#d8d8d8" stroke-width="1.1"/><path d="M568.6,440 L571.6,443.8 L574.6,440 M571.6,443.8 V447.5" fill="none" stroke="#d8d8d8" stroke-width="1.1"/><path d="M621.2,492.8 L628,500.8 M628,492.8 L621.2,500.8" fill="none" stroke="#d8d8d8" stroke-width="1.2"/><rect x="1044" y="291.6" width="10" height="3.6" fill="#e8e8e8"/><path d="M1065.5,285.5 H1074 V294" fill="none" stroke="#e8e8e8" stroke-width="1.6"/><rect x="1064" y="287.8" width="8.5" height="8.5" fill="none" stroke="#e8e8e8" stroke-width="2.2"/><path d="M1084,286.5 L1093,295 M1093,286.5 L1084,295" stroke="#e8e8e8" stroke-width="2.6"/><line x1="970.5" y1="498.8" x2="1021.5" y2="675" stroke="#ffff00" stroke-width="3.9"/><path d="M1013.9,679.2 L1030,673.8 L1028.9,700.2Z" fill="#ffff00"/></svg>
<!-- ===== STATUS BAR ===== -->
<svg style="left:0;top:0" width="1105" height="728">
<rect x="17" y="709" width="15" height="2" fill="#e8e8e8"/><rect x="17" y="713" width="15" height="2" fill="#e8e8e8"/><rect x="17" y="717" width="15" height="2" fill="#e8e8e8"/><path d="M61.5,703.6 H127.4 L116,725.6 H49.6Z" fill="#4b5b77"/><path d="M200,704 L193,721 M273.7,704 L267,721 M303.6,704 L297,721" stroke="#5f6773" stroke-width="1"/><path d="M279.5,716 H290.5 M285,710.7 V721.3" stroke="#f0f0f0" stroke-width="1.8"/><rect x="456" y="723" width="158" height="1" fill="#454b55"/><path d="M620.7,708 V721.6 H634" fill="none" stroke="#f0f0f0" stroke-width="1.2"/><path d="M621,716.5 H625.6 V721" fill="none" stroke="#5cb6f2" stroke-width="1.2"/><rect x="639.5" y="704.5" width="19" height="20" fill="#4a5d78" stroke="#4aa8ea" stroke-width="1.2"/><rect x="661.5" y="704.5" width="19" height="20" fill="#4a5d78" stroke="#4aa8ea" stroke-width="1.2"/><rect x="683.5" y="704.5" width="19" height="20" fill="#4a5d78" stroke="#4aa8ea" stroke-width="1.2"/><rect x="727.5" y="704.5" width="19" height="20" fill="#4a5d78" stroke="#4aa8ea" stroke-width="1.2"/><rect x="771.5" y="704.5" width="19" height="20" fill="#4a5d78" stroke="#4aa8ea" stroke-width="1.2"/><rect x="793.5" y="704.5" width="19" height="20" fill="#4a5d78" stroke="#4aa8ea" stroke-width="1.2"/><circle cx="648.5" cy="715.4" r="6.2" fill="none" stroke="#f0f0f0" stroke-width="1.2"/><path d="M655.5,709 L648.5,715.4 H656.5" fill="none" stroke="#5cb6f2" stroke-width="1.2"/><rect x="664.5" y="708.8" width="13" height="12.6" fill="none" stroke="#f0f0f0" stroke-width="1.3"/><rect x="664.5" y="708.8" width="4.5" height="4.5" fill="none" stroke="#e03c3c" stroke-width="1.2"/><path d="M686,720.5 L698,709 M686,720.5 H700.5" fill="none" stroke="#f0f0f0" stroke-width="1.2"/><rect x="691.3" y="713.2" width="2.6" height="2.6" fill="none" stroke="#5cb6f2" stroke-width="1"/><path d="M709,708.5 V720.8 H721" fill="none" stroke="#f0f0f0" stroke-width="1.2"/><path d="M709,720.8 L714,716" stroke="#f0f0f0" stroke-width="0.9"/><path d="M707.5,710 L709,708 L710.5,710 M719.5,719.3 L721.5,720.8 L719.5,722.3" fill="none" stroke="#f0f0f0" stroke-width="1"/><path d="M719,708.5 L715,713 H718 L715.5,717 L721,712 H718 L720.5,708.5Z" fill="#f2c12e"/><path d="M730,713.8 H737 M733.5,710.2 V717.4" stroke="#f0f0f0" stroke-width="1.3"/><rect x="735.5" y="716.5" width="8.5" height="3" fill="none" stroke="#5cb6f2" stroke-width="1.1"/><rect x="753" y="709.5" width="12.3" height="1.8" fill="#f0f0f0"/><rect x="753" y="712.8" width="12.3" height="2.2" fill="#f0f0f0"/><rect x="753" y="717.2" width="12.3" height="2.8" fill="#f0f0f0"/><rect x="774.3" y="707.8" width="13.4" height="13.4" fill="none" stroke="#e8e8e8" stroke-width="1.4"/><rect x="776.4" y="709.9" width="9.2" height="9.2" fill="#7fbfea"/><path d="M796,711 H802.5 M799.2,707.7 V714.3" stroke="#f0f0f0" stroke-width="1.2"/><rect x="802" y="714" width="5" height="5" fill="#f0f0f0"/><rect x="804" y="716" width="5" height="5" fill="#4a5d78" stroke="#5cb6f2" stroke-width="1"/><rect x="818" y="708.8" width="14" height="1.3" fill="#f0f0f0"/><rect x="818" y="711" width="14" height="1.3" fill="#f0f0f0"/><path d="M818,715.5 H832" stroke="#5cb6f2" stroke-width="1.1" stroke-dasharray="2,1.3"/><rect x="818" y="718.8" width="14" height="1.3" fill="#f0f0f0"/><rect x="818" y="721" width="14" height="1.3" fill="#f0f0f0"/><rect x="839" y="716.3" width="7" height="5.7" fill="#c0c0c0"/><rect x="846" y="707" width="1" height="15" fill="#f2c12e"/><rect x="847" y="707" width="7" height="6" fill="#5cb6f2"/><path d="M862,707 V720.5 M876.5,706 V720.5 M862,706.5 H877 M862,719.8 H876.5" fill="none" stroke="#5cb6f2" stroke-width="1"/><path d="M866.3,710 C864.3,710 864.3,717.5 866.3,717.5 C868.3,717.5 868.3,710 866.3,710Z M872.3,710 C870.3,710 870.3,717.5 872.3,717.5 C874.3,717.5 874.3,710 872.3,710Z" fill="none" stroke="#5cb6f2" stroke-width="0.9"/><rect x="868.8" y="716.5" width="1" height="1" fill="#5cb6f2"/><path d="M938.5,709.5 H948 L943.25,713.8Z" fill="#f0f0f0"/><path d="M965.1,705 L968.1,712 L972.8,720.2 L965.1,717.5 L957.1,720.2 L963,711.2Z" fill="#c8d6e6" stroke="#5cb6f2" stroke-width="0.9" stroke-linejoin="round"/><path d="M963.2,706 L957,709.8 H960.8 L958.5,712.8 L964.8,708.6 H961.2 L963.8,706Z" fill="#a9bdd4"/><rect x="979.5" y="710" width="7" height="7" fill="none" stroke="#f0f0f0" stroke-width="1.2"/><circle cx="990.2" cy="709.8" r="4.2" fill="#313740" stroke="#f0f0f0" stroke-width="1.2"/><path d="M988.5,714.5 L992.5,718 L988.5,721.5 L984.5,718Z" fill="#313740" stroke="#f0f0f0" stroke-width="1.1"/><g transform="translate(1009,712.9)"><circle r="4.2" fill="none" stroke="#5cb6f2" stroke-width="2.8"/><rect x="-1.4" y="-7" width="2.8" height="3.6" fill="#5cb6f2" transform="rotate(0)"/><rect x="-1.4" y="-7" width="2.8" height="3.6" fill="#5cb6f2" transform="rotate(45)"/><rect x="-1.4" y="-7" width="2.8" height="3.6" fill="#5cb6f2" transform="rotate(90)"/><rect x="-1.4" y="-7" width="2.8" height="3.6" fill="#5cb6f2" transform="rotate(135)"/><rect x="-1.4" y="-7" width="2.8" height="3.6" fill="#5cb6f2" transform="rotate(180)"/><rect x="-1.4" y="-7" width="2.8" height="3.6" fill="#5cb6f2" transform="rotate(225)"/><rect x="-1.4" y="-7" width="2.8" height="3.6" fill="#5cb6f2" transform="rotate(270)"/><rect x="-1.4" y="-7" width="2.8" height="3.6" fill="#5cb6f2" transform="rotate(315)"/></g><rect x="1024.9" y="708.2" width="12.4" height="9.6" fill="none" stroke="#5cb6f2" stroke-width="1.5"/><path d="M1026.8,704.8 V708.2 M1026.8,717.8 V721" stroke="#5cb6f2" stroke-width="1.1"/><path d="M1029.8,704.8 V708.2 M1029.8,717.8 V721" stroke="#5cb6f2" stroke-width="1.1"/><path d="M1032.8,704.8 V708.2 M1032.8,717.8 V721" stroke="#5cb6f2" stroke-width="1.1"/><path d="M1035.6,704.8 V708.2 M1035.6,717.8 V721" stroke="#5cb6f2" stroke-width="1.1"/><path d="M1033,709.3 L1028.3,713.6 H1031 L1028.8,717 L1033.8,712.4 H1031.2 L1033.4,709.3Z" fill="#f2c12e"/><path d="M1046.5,710 V706.5 H1050 M1056,706.5 H1059.5 V710 M1046.5,716.5 V720 H1050 M1059.5,716.5 V720 H1056" fill="none" stroke="#f0f0f0" stroke-width="1.6"/><path d="M1047.5,707.5 L1051.5,711.5 M1058.5,707.5 L1054.5,711.5 M1047.5,719 L1051.5,715 M1058.5,719 L1054.5,715" stroke="#f0f0f0" stroke-width="1"/><rect x="1068" y="707" width="14" height="2.2" fill="#5cb6f2"/><rect x="1068" y="713" width="14" height="2.2" fill="#5cb6f2"/><rect x="1068" y="719" width="14" height="2.2" fill="#5cb6f2"/><path d="M1092,725 L1102,715 M1095,725 L1102,718 M1098,725 L1102,721" stroke="#d8d8d8" stroke-width="1"/></svg>
<div class="t" style="left:70.68px;top:710px;font-size:11.8px;transform:scaleX(1.0212);transform-origin:0 0;font-weight:bold">Model</div>
<div class="t" style="left:138.30px;top:710px;font-size:11.8px;transform:scaleX(0.9667);transform-origin:0 0">Arkusz1</div>
<div class="t" style="left:212.30px;top:710px;font-size:11.8px;transform:scaleX(0.9667);transform-origin:0 0">Arkusz2</div>
<div class="t" style="left:455.34px;top:710px;font-size:10.5px;transform:scaleX(0.9586);transform-origin:0 0;color:#e6e8ea;font-family:'Liberation Mono',monospace">814.2839, 464.0676, 0.0000</div>
<div class="t" style="left:880.00px;top:708px;font-size:10.5px;transform:scaleX(0.9439);transform-origin:0 0;color:#8592a2;font-family:'Liberation Mono',monospace">Milimetry</div>
</body></html>
